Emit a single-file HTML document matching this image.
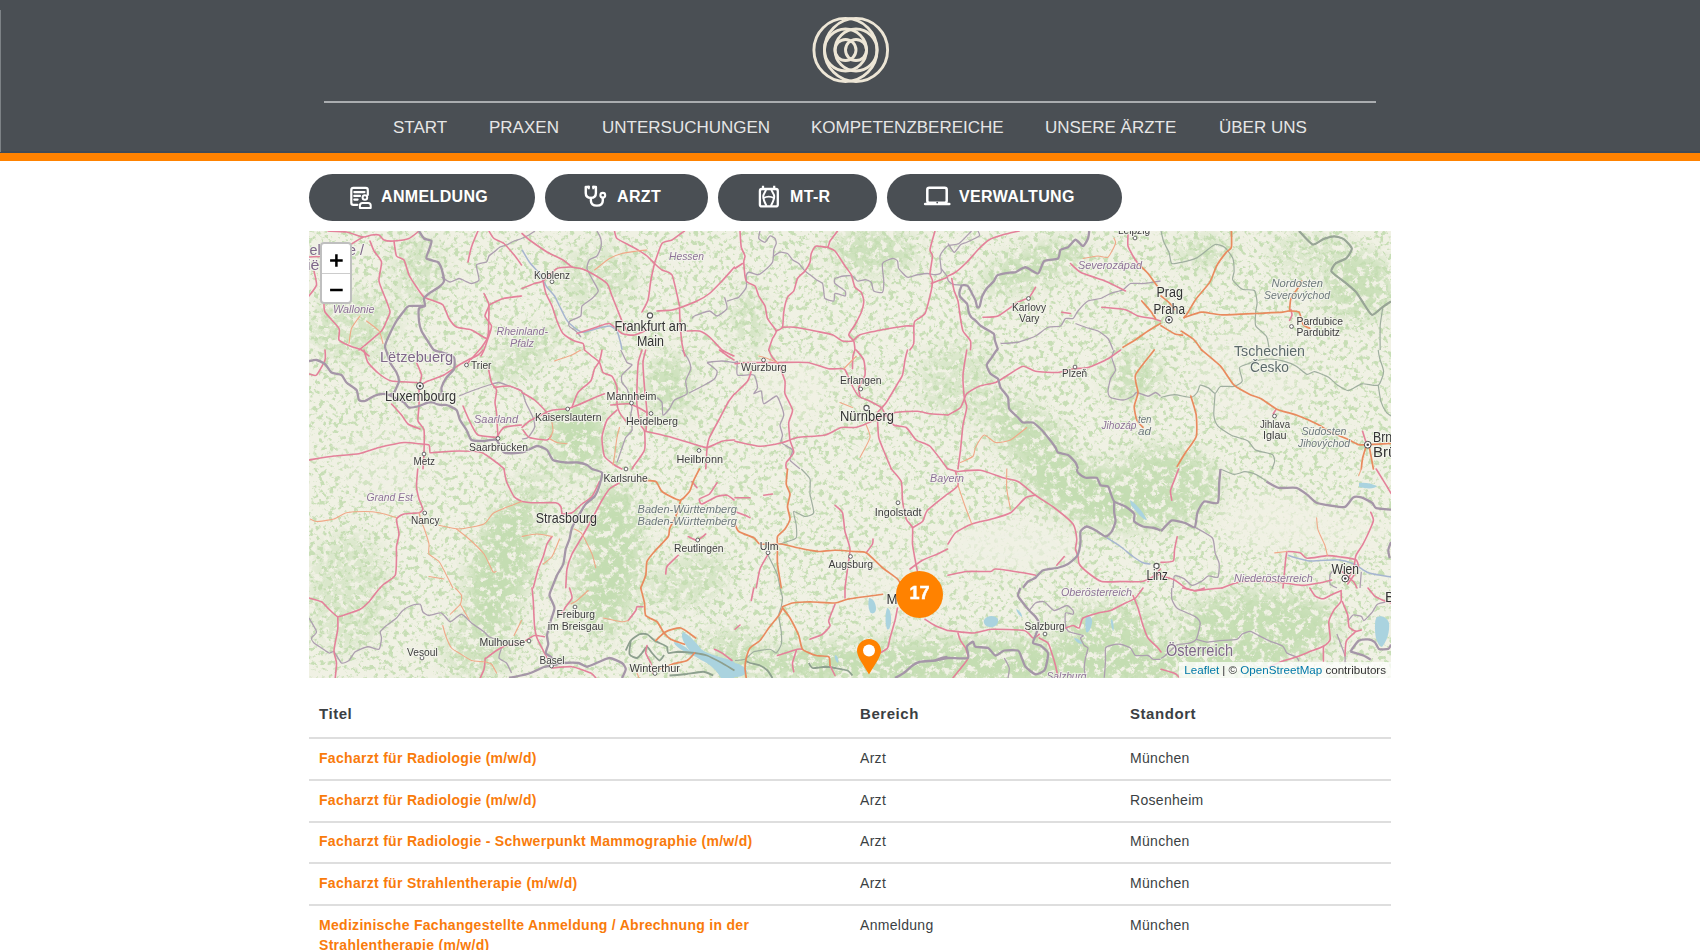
<!DOCTYPE html>
<html><head><meta charset="utf-8">
<style>
*{box-sizing:border-box}
html,body{margin:0;padding:0;background:#fff;width:1700px;height:950px;overflow:hidden;font-family:"Liberation Sans",sans-serif}
svg text{font-family:"Liberation Sans",sans-serif}
.hdr{position:absolute;left:0;top:0;width:1700px;height:152px;background:#4a4f54}
.hl2{position:absolute;left:0;top:151px;width:1700px;height:2px;background:#404a55}
.edge{position:absolute;left:0;top:10px;width:1px;height:142px;background:#7d8286}
.logo{position:absolute;left:800px;top:0;width:100px;height:100px}
.hline{position:absolute;left:324px;top:101px;width:1052px;height:2px;background:#aaadb0}
.nav{position:absolute;top:117.6px;font-size:17px;color:#e6e6e6;white-space:nowrap;line-height:20px}
.obar{position:absolute;left:0;top:152.6px;width:1700px;height:8px;background:#ff8200}
.btn{position:absolute;top:174px;height:47px;border-radius:24px;background:#4a4f54;color:#fff;font-weight:bold;font-size:16px;letter-spacing:0.35px}
.btn svg{position:absolute;top:13px}
.btn span{position:absolute;top:13px;line-height:20px;white-space:nowrap}
.map{position:absolute;left:309px;top:231px;width:1082px;height:447px;overflow:hidden;background:#e6ecd6}
.zoom{position:absolute;left:11px;top:11px;width:32px;height:62px;border:2px solid rgba(0,0,0,0.25);border-radius:4px;background:#fff}
.zoom div{position:absolute;left:0;width:28px;height:29px;text-align:center;font:bold 18px/29px "Liberation Sans",sans-serif;color:#000}
.clu{position:absolute;left:587px;top:340px;width:47px;height:47px;border-radius:50%;background:#ff8200}
.clu span{position:absolute;left:0;top:12.4px;width:47px;text-align:center;color:#fff;font:bold 18px/20px "Liberation Sans",sans-serif;-webkit-text-stroke:0.5px #fff}
.attr{position:absolute;right:0;bottom:0;height:16px;padding:0 5px;background:rgba(255,255,255,0.75);font-size:11.6px;line-height:16px;color:#333;white-space:nowrap}
.attr a{color:#0078a8;text-decoration:none}
.tbl{position:absolute;left:309px;top:690px;width:1082px}
.ln{position:absolute;left:0;width:1082px;height:2px;background:#dedede}
.cell{position:absolute;white-space:nowrap;font-size:14px;line-height:20px;letter-spacing:0.3px}
.h{font-weight:bold;color:#3b3f43;font-size:15px;letter-spacing:0.55px}
.o{font-weight:bold;color:#f97b0b}
.n{color:#3b3f43}
</style></head><body>
<div class="hdr"></div>
<div class="hl2"></div>
<div class="edge"></div>
<svg class="logo" viewBox="800 0 100 100" width="100" height="100" fill="none" stroke="#ede6d6" stroke-width="2.9">
 <circle cx="845.5" cy="50" r="31.6"/><circle cx="856" cy="50" r="31.6"/>
 <circle cx="845.5" cy="50" r="21"/><circle cx="856" cy="50" r="21"/>
 <circle cx="845.5" cy="50" r="10.5"/><circle cx="856" cy="50" r="10.5"/>
</svg>
<div class="hline"></div>
<div class="nav" style="left:393px">START</div>
<div class="nav" style="left:489px">PRAXEN</div>
<div class="nav" style="left:602px">UNTERSUCHUNGEN</div>
<div class="nav" style="left:811px">KOMPETENZBEREICHE</div>
<div class="nav" style="left:1045px">UNSERE ÄRZTE</div>
<div class="nav" style="left:1219px">ÜBER UNS</div>
<div class="obar"></div>

<div class="btn" style="left:309px;width:226px"><span style="left:72px">ANMELDUNG</span></div>
<div class="btn" style="left:545px;width:163px"><span style="left:72px">ARZT</span></div>
<div class="btn" style="left:718px;width:159px"><span style="left:72px">MT-R</span></div>
<div class="btn" style="left:887px;width:235px"><span style="left:72px">VERWALTUNG</span></div>

<svg style="position:absolute;left:0;top:0" width="1700" height="250" fill="none" stroke="#fff" stroke-width="2.2" stroke-linecap="round" stroke-linejoin="round">
 <path d="M367.8,195 V190 Q367.8,187.9 365.7,187.9 H353.4 Q351.3,187.9 351.3,190 V202.7 Q351.3,204.8 353.4,204.8 H357.4"/>
 <path d="M354.3,192.1 H364.5 M354.3,195.9 H360 M354.3,199.6 H357.6"/>
 <circle cx="364.9" cy="197.5" r="2.3" stroke-width="2"/>
 <path d="M359.9,208.1 V205.4 Q359.9,202.9 362.4,202.9 H368.2 Q370.7,202.9 370.7,205.4 V208.1 Z" stroke-width="2"/>
 <path d="M588.7,186.9 H585.75 V193 Q585.75,197.9 590.9,197.9 Q595.9,197.9 595.9,193 V186.9 H593.4" stroke-width="2.4"/>
 <path d="M588.7,185.8 V189.2 M593.4,185.8 V189.2" stroke-width="2.2" stroke-linecap="butt"/>
 <path d="M590.9,198 V200.8 Q590.9,205.6 596.9,205.6 Q602.8,205.6 602.8,200.8 V197.8" stroke-width="2.4"/>
 <circle cx="602.8" cy="195.3" r="2.4" stroke-width="2.1"/>
 <rect x="759.9" y="189" width="17.9" height="17.4" rx="2" stroke-width="2.3"/>
 <path d="M763,185.8 V188.5 M774.2,185.8 V188.5" stroke-width="2.2" stroke-linecap="butt"/>
 <path d="M765.9,190 C765.2,192.5 763.25,194 763.25,196.5 C763.25,199.5 764.2,201.5 766.2,205.2" stroke-width="2"/>
 <path d="M771.5,190 C772.2,192.5 774.2,194 774.2,196.5 C774.2,199.5 773.2,201.5 771.2,205.2" stroke-width="2"/>
 <path d="M763.6,198 Q768.7,195.2 773.9,198" stroke-width="1.9"/>
 <rect x="927.3" y="187.8" width="19.4" height="15" rx="2" stroke-width="2.5"/>
 <path d="M925.2,204 H949.3" stroke-width="2.6"/>
 <circle cx="937.2" cy="202.6" r="0.9" fill="#4a4f54" stroke="none"/>
</svg>
<div class="map">
<svg width="1082" height="447" viewBox="0 0 1082 447" style="position:absolute;left:0;top:0">
<defs>
<filter id="texA" color-interpolation-filters="sRGB" x="0" y="0" width="100%" height="100%" filterUnits="userSpaceOnUse"><feTurbulence type="fractalNoise" baseFrequency="0.2" numOctaves="4" seed="7"/><feColorMatrix type="matrix" values="0 0 0 0 0.78  0 0 0 0 0.87  0 0 0 0 0.71  7 0 0 0 -3.7"/><feGaussianBlur stdDeviation="0.5"/></filter>
<filter id="texB" color-interpolation-filters="sRGB" x="0" y="0" width="100%" height="100%" filterUnits="userSpaceOnUse"><feTurbulence type="fractalNoise" baseFrequency="0.14" numOctaves="4" seed="11"/><feColorMatrix type="matrix" values="0 0 0 0 0.77  0 0 0 0 0.865  0 0 0 0 0.70  7 0 0 0 -2.6"/><feGaussianBlur stdDeviation="0.5"/></filter>
<filter id="bl" x="-50%" y="-50%" width="200%" height="200%"><feGaussianBlur stdDeviation="9"/></filter>
<filter id="halo"><feGaussianBlur stdDeviation="0.3"/></filter>
<mask id="fm" maskUnits="userSpaceOnUse" x="0" y="0" width="1082" height="447"><g filter="url(#bl)">
<ellipse cx="268" cy="205" rx="30" ry="40" transform="rotate(0 268 205)" fill="#fff" fill-opacity="1.0"/>
<ellipse cx="192" cy="335" rx="30" ry="72" transform="rotate(15 192 335)" fill="#fff" fill-opacity="1.0"/>
<ellipse cx="300" cy="330" rx="32" ry="78" transform="rotate(8 300 330)" fill="#fff" fill-opacity="1.0"/>
<ellipse cx="780" cy="262" rx="72" ry="30" transform="rotate(20 780 262)" fill="#fff" fill-opacity="1.0"/>
<ellipse cx="720" cy="205" rx="50" ry="26" transform="rotate(38 720 205)" fill="#fff" fill-opacity="0.9"/>
<ellipse cx="725" cy="35" rx="55" ry="18" transform="rotate(-20 725 35)" fill="#fff" fill-opacity="0.9"/>
<ellipse cx="700" cy="432" rx="290" ry="24" transform="rotate(0 700 432)" fill="#fff" fill-opacity="1.0"/>
<ellipse cx="950" cy="395" rx="80" ry="35" transform="rotate(0 950 395)" fill="#fff" fill-opacity="0.95"/>
<ellipse cx="360" cy="155" rx="24" ry="32" transform="rotate(0 360 155)" fill="#fff" fill-opacity="0.8"/>
<ellipse cx="212" cy="125" rx="45" ry="14" transform="rotate(-35 212 125)" fill="#fff" fill-opacity="0.8"/>
<ellipse cx="110" cy="40" rx="25" ry="35" transform="rotate(0 110 40)" fill="#fff" fill-opacity="0.6"/>
<ellipse cx="45" cy="95" rx="45" ry="35" transform="rotate(0 45 95)" fill="#fff" fill-opacity="0.6"/>
<ellipse cx="1050" cy="55" rx="35" ry="35" transform="rotate(0 1050 55)" fill="#fff" fill-opacity="0.85"/>
<ellipse cx="826" cy="145" rx="28" ry="25" transform="rotate(0 826 145)" fill="#fff" fill-opacity="0.8"/>
<ellipse cx="895" cy="20" rx="28" ry="15" transform="rotate(0 895 20)" fill="#fff" fill-opacity="0.7"/>
<ellipse cx="855" cy="255" rx="55" ry="40" transform="rotate(0 855 255)" fill="#fff" fill-opacity="0.9"/>
<ellipse cx="565" cy="20" rx="45" ry="22" transform="rotate(0 565 20)" fill="#fff" fill-opacity="0.8"/>
<ellipse cx="440" cy="90" rx="15" ry="30" transform="rotate(0 440 90)" fill="#fff" fill-opacity="0.7"/>
<ellipse cx="800" cy="395" rx="50" ry="22" transform="rotate(0 800 395)" fill="#fff" fill-opacity="0.9"/>
<ellipse cx="290" cy="45" rx="40" ry="30" transform="rotate(0 290 45)" fill="#fff" fill-opacity="0.55"/>
<ellipse cx="225" cy="260" rx="20" ry="25" transform="rotate(0 225 260)" fill="#fff" fill-opacity="0.6"/>
<ellipse cx="380" cy="350" rx="45" ry="25" transform="rotate(-20 380 350)" fill="#fff" fill-opacity="0.6"/>
<ellipse cx="170" cy="420" rx="35" ry="28" transform="rotate(0 170 420)" fill="#fff" fill-opacity="0.7"/>
<ellipse cx="40" cy="360" rx="40" ry="60" transform="rotate(0 40 360)" fill="#fff" fill-opacity="0.5"/>
<ellipse cx="650" cy="150" rx="40" ry="40" transform="rotate(0 650 150)" fill="#fff" fill-opacity="0.5"/>
<ellipse cx="420" cy="420" rx="30" ry="25" transform="rotate(0 420 420)" fill="#fff" fill-opacity="0.6"/>
<ellipse cx="1000" cy="20" rx="40" ry="20" transform="rotate(0 1000 20)" fill="#fff" fill-opacity="0.5"/>
</g></mask>
</defs>
<rect width="1082" height="447" fill="#f0f1e4"/>
<rect width="1082" height="447" filter="url(#texA)"/>
<g filter="url(#bl)">
<ellipse cx="700" cy="315" rx="70" ry="25" transform="rotate(0 700 315)" fill="#f0f1e4" fill-opacity="0.70"/>
<ellipse cx="252" cy="345" rx="10" ry="75" transform="rotate(8 252 345)" fill="#f0f1e4" fill-opacity="0.56"/>
<ellipse cx="480" cy="160" rx="40" ry="35" transform="rotate(0 480 160)" fill="#f0f1e4" fill-opacity="0.49"/>
<ellipse cx="940" cy="145" rx="60" ry="45" transform="rotate(0 940 145)" fill="#f0f1e4" fill-opacity="0.42"/>
<ellipse cx="965" cy="290" rx="55" ry="28" transform="rotate(0 965 290)" fill="#f0f1e4" fill-opacity="0.63"/>
<ellipse cx="590" cy="360" rx="45" ry="30" transform="rotate(0 590 360)" fill="#f0f1e4" fill-opacity="0.42"/>
<ellipse cx="1040" cy="300" rx="40" ry="20" transform="rotate(0 1040 300)" fill="#f0f1e4" fill-opacity="0.49"/>
<ellipse cx="80" cy="230" rx="50" ry="35" transform="rotate(0 80 230)" fill="#f0f1e4" fill-opacity="0.35"/>
</g>
<g mask="url(#fm)"><rect width="1082" height="447" filter="url(#texB)"/></g>
<path d="M374,401 C380,404 386,410 392,418 C398,423 408,425 418,428 L425.5,431 L425.5,447 L412,447 C408,440 402,434 394,430 C386,426 380,420 376,413 C373,408 372,404 374,401 Z" fill="#aad3df"/>
<path d="M365,411 C370,412 376,415 380,419 C384,421 388,423 392,424 L391,426.5 C385,425.5 378,422.5 372,418.5 C368,415.5 365,413.5 365,411 Z" fill="#aad3df"/>
<path d="M560,367 C564,367 567,372 567,378 C567,382 563,384 561,381 C559,377 559,371 560,367 Z" fill="#aad3df"/>
<path d="M578,377 C581,377 582.5,384 582,391 C581.5,396 580,400 578,398 C576,393 576,383 578,377 Z" fill="#aad3df"/>
<path d="M526,424 C528,424 530,428 529,432 C527,431 525,427 526,424 Z" fill="#aad3df"/>
<path d="M425,432 C430,432 436,436 438,440 C437,444 432,446 425,446 Z" fill="#aad3df"/>
<path d="M675,389 C678,384 686,384 689,388 C690,393 686,397 680,396 C676,395 674,392 675,389 Z" fill="#aad3df"/>
<path d="M777,385 C780,384 784,386 783,392 C782,398 779,403 777,401 C776,396 776,390 777,385 Z" fill="#aad3df"/>
<path d="M802,388 C804,388 805,394 804.5,400 C803,399 801.5,393 802,388 Z" fill="#aad3df"/>
<path d="M765,407 C768,407 773,410 773,413 C770,413 766,410 765,407 Z" fill="#aad3df"/>
<path d="M707,378 C710,379 713,382 713,386 C711,385 708,382 707,378 Z" fill="#aad3df"/>
<path d="M1050,252 C1055,251 1062,252 1068,255 C1066,258 1058,258 1050,256 Z" fill="#aad3df"/>
<path d="M821,269 C826,272 833,279 838,289 C834,289 827,281 822,274 Z" fill="#aad3df"/>
<path d="M1068,386 C1072,384 1078,386 1080,392 C1081,400 1078,410 1073,416 C1068,414 1066,406 1066,398 C1066,392 1066,388 1068,386 Z" fill="#aad3df"/>
<path d="M213,18.75 C213.8,20.0 218.8,28.9 220.5,31.25 C222.2,33.6 228.2,39.5 230,42 C231.8,44.5 236.4,54.0 238,56.25 C239.6,58.5 244.2,63.1 245.5,65 C246.8,66.9 249.4,72.8 250.5,75 C251.6,77.2 255.8,85.8 256.75,87.5 C257.8,89.2 258.9,91.1 260.5,92.5 C262.1,93.9 270.2,100.8 273,101.25 C275.8,101.8 285.2,98.1 288,97.5 C290.8,96.9 298.5,94.8 300.5,95 C302.5,95.2 306.9,98.2 308,100 C309.1,101.8 311.2,110.6 311.75,112.5 C312.2,114.4 312.9,118.1 313,118.75" fill="none" stroke="#a6b5d0" stroke-width="1.5" stroke-linejoin="round"/>
<path d="M979.2,324.6 C981.4,325.1 996.0,329.6 1000.85,330 C1005.7,330.4 1023.5,328.4 1027.9,328.7 C1032.3,329.0 1041.8,331.7 1045,333 C1048.2,334.3 1056.3,340.7 1060,342 C1063.7,343.3 1079.8,345.6 1082,346" fill="none" stroke="#a6b5d0" stroke-width="1.5" stroke-linejoin="round"/>
<path d="M797.75,306.75 C799.1,307.6 808.9,313.6 811.5,315.5 C814.1,317.4 821.8,323.9 824,325.5 C826.2,327.1 832.2,331.0 834,331.75 C835.8,332.5 840.8,332.9 841.5,333" fill="none" stroke="#a6b5d0" stroke-width="1.5" stroke-linejoin="round"/>
<path d="M451,0 C450.9,0.8 449.2,6.4 449.75,7.5 C450.2,8.6 454.9,11.5 456,11.25 C457.1,11.0 460.0,5.4 461,5 C462.0,4.6 465.4,6.8 466,7.5 C466.6,8.2 467.4,11.4 467.25,12.5 C467.1,13.6 465.1,16.9 464.75,18.75 C464.4,20.6 464.6,29.0 463.5,31.25 C462.4,33.5 455.0,40.0 453.5,41.25 C452.0,42.5 449.9,43.8 448.5,43.75 C447.1,43.8 440.9,41.1 439.75,41.25 C438.6,41.4 437.5,43.5 437.25,45 C437.0,46.5 438.0,54.1 437.25,56.25 C436.5,58.4 430.9,65.1 429.75,66.25 C428.6,67.4 427.2,67.1 426,67.5 C424.8,67.9 418.8,69.8 418,70" fill="none" stroke="#ad9fb0" stroke-width="1.3" stroke-linejoin="round"/>
<path d="M464.75,25 C465.4,24.6 469.6,21.5 471,21.25 C472.4,21.0 477.2,21.8 478.5,22.5 C479.8,23.2 482.4,27.8 483.5,28.75 C484.6,29.8 488.5,31.4 489.75,32.5 C491.0,33.6 494.9,38.9 496,40 C497.1,41.1 499.9,42.9 501,43.75 C502.1,44.6 506.0,47.9 507.25,48.75 C508.5,49.6 512.8,51.4 513.5,52.5 C514.2,53.6 514.5,58.5 514.75,60 C515.0,61.5 515.0,66.5 516,67.5 C517.0,68.5 523.8,70.5 524.75,70 C525.8,69.5 524.9,63.0 526,62.5 C527.1,62.0 535.0,65.2 536,65 C537.0,64.8 537.0,61.2 536,60 C535.0,58.8 527.0,53.8 526,52.5 C525.0,51.2 525.1,48.2 526,47.5 C526.9,46.8 533.0,45.2 534.75,45 C536.5,44.8 542.1,44.5 543.5,45 C544.9,45.5 547.2,49.6 548.5,50 C549.8,50.4 554.6,48.6 556,48.75 C557.4,48.9 561.4,50.1 562.25,51.25 C563.1,52.4 563.6,59.0 564.75,60 C565.9,61.0 572.5,62.2 573.5,61.25 C574.5,60.2 574.8,52.9 574.75,50 C574.8,47.1 572.6,34.8 573.5,32.5 C574.4,30.2 582.0,27.8 583.5,27.5 C585.0,27.2 587.9,29.0 588.5,30 C589.1,31.0 588.8,35.9 589.75,37.5 C590.8,39.1 596.6,45.6 598.5,46.25 C600.4,46.9 606.5,44.1 608.5,43.75 C610.5,43.4 616.8,42.5 618.5,42.5 C620.2,42.5 624.6,43.9 626,43.75 C627.4,43.6 631.8,43.1 632.25,41.25 C632.8,39.4 630.4,27.6 631,25 C631.6,22.4 636.6,16.2 638.5,15 C640.4,13.8 647.6,14.0 650,12.5 C652.4,11.0 661.2,1.2 662.5,0" fill="none" stroke="#ad9fb0" stroke-width="1.3" stroke-linejoin="round"/>
<path d="M428.5,130 C428.5,131.4 426.9,142.6 428.5,144 C430.1,145.4 442.8,142.8 444.75,144 C446.8,145.2 448.5,154.6 448.5,156.5 C448.5,158.4 444.4,162.4 444.75,162.75 C445.1,163.1 451.2,159.0 452.25,160 C453.2,161.0 453.2,172.2 454.75,172.75 C456.2,173.2 465.6,165.1 467.25,165 C468.9,164.9 470.2,169.6 471,171.5 C471.8,173.4 474.8,181.8 474.75,184 C474.8,186.2 471.1,192.0 471,194 C470.9,196.0 473.4,202.2 473.5,204 C473.6,205.8 471.2,210.0 472.25,211.5 C473.2,213.0 482.6,217.2 483.5,219 C484.4,220.8 480.2,227.1 481,229 C481.8,230.9 490.0,236.9 491,237.75" fill="none" stroke="#ad9fb0" stroke-width="1.3" stroke-linejoin="round"/>
<path d="M669,0 C669.1,0.5 671.4,3.9 670.25,5 C669.1,6.1 659.6,10.4 657.75,11.25 C655.9,12.1 652.8,12.8 651.5,13.75 C650.2,14.8 646.5,21.4 645.25,21.25 C644.0,21.1 639.6,13.4 639,12.5" fill="none" stroke="#ad9fb0" stroke-width="1.3" stroke-linejoin="round"/>
<path d="M691.5,112.5 C693.2,112.4 705.5,112.0 709,111.25 C712.5,110.5 723.5,106.5 726.5,105 C729.5,103.5 736.5,97.2 739,96.25 C741.5,95.2 749.8,95.9 751.5,95 C753.2,94.1 755.2,88.2 756.5,87.5 C757.8,86.8 762.8,88.2 764,87.5 C765.2,86.8 767.5,81.8 769,80 C770.5,78.2 776.8,71.2 779,70 C781.2,68.8 789.2,68.2 791.5,67.5 C793.8,66.8 799.2,63.4 801.5,62.5 C803.8,61.6 812.0,59.8 814,58.75 C816.0,57.8 819.5,53.1 821.5,52.5 C823.5,51.9 831.0,52.8 834,52.5 C837.0,52.2 849.8,50.2 851.5,50" fill="none" stroke="#ad9fb0" stroke-width="1.3" stroke-linejoin="round"/>
<path d="M766.5,92.5 C767.5,92.9 774.2,95.5 776.5,96.25 C778.8,97.0 786.8,98.9 789,100 C791.2,101.1 797.5,105.6 799,107.5 C800.5,109.4 803.5,117.6 804,118.75" fill="none" stroke="#ad9fb0" stroke-width="1.3" stroke-linejoin="round"/>
<path d="M805.25,119 C805.0,119.8 802.6,124.5 802.75,126.5 C802.9,128.5 806.6,136.9 806.5,139 C806.4,141.1 802.2,145.6 801.5,147.75 C800.8,149.9 799.0,158.4 799,160.25 C799.0,162.1 800.0,165.6 801.5,166.5 C803.0,167.4 811.8,169.1 814,169 C816.2,168.9 822.6,166.0 824,165.25 C825.4,164.5 826.2,161.5 827.75,161.5 C829.2,161.5 837.1,165.2 839,165.25 C840.9,165.2 845.2,161.5 846.5,161.5 C847.8,161.5 851.0,164.9 851.5,165.25" fill="none" stroke="#ad9fb0" stroke-width="1.3" stroke-linejoin="round"/>
<path d="M885.8,296.2 C887.6,297.3 901.4,304.4 903.4,307 C905.4,309.6 905.4,319.3 906.1,321.9 C906.8,324.5 909.9,330.3 910.2,332.7 C910.5,335.1 909.9,345.0 908.8,346.25 C907.7,347.5 901.0,344.5 899.4,344.9 C897.8,345.3 894.2,349.4 892.6,350.3 C891.0,351.2 884.9,354.7 883.1,354.4 C881.3,354.1 876.8,348.6 875,347.6 C873.2,346.7 866.6,344.0 865.5,344.9 C864.4,345.8 864.3,355.8 864.2,357" fill="none" stroke="#ad9fb0" stroke-width="1.3" stroke-linejoin="round"/>
<path d="M1025.2,338.1 C1024.8,338.6 1021.6,342.0 1021.15,343.5 C1020.7,345.0 1020.5,351.6 1021.15,353 C1021.8,354.4 1027.3,356.6 1028,357" fill="none" stroke="#ad9fb0" stroke-width="1.3" stroke-linejoin="round"/>
<path d="M1052.3,340.8 L1051,357" fill="none" stroke="#ad9fb0" stroke-width="1.3" stroke-linejoin="round"/>
<path d="M0,387 C0.8,388.4 7.2,398.8 7.5,400.75 C7.8,402.8 2.8,405.9 2.5,407 C2.2,408.1 4.0,411.0 5,412 C6.0,413.0 11.0,416.0 12.5,417 C14.0,418.0 18.8,421.6 20,422 C21.2,422.4 23.8,419.8 25,420.75 C26.2,421.8 31.0,431.1 32.5,432 C34.0,432.9 38.6,430.6 40,429.5 C41.4,428.4 44.4,422.1 46.25,420.75 C48.1,419.4 56.4,416.0 58.75,415.75 C61.1,415.5 68.6,419.1 70,418.25 C71.4,417.4 72.4,408.8 72.5,407 C72.6,405.2 70.8,402.0 71.25,400.75 C71.8,399.5 75.9,395.9 77.5,394.5 C79.1,393.1 85.9,388.5 87.5,387 C89.1,385.5 92.2,380.8 93.75,379.5 C95.2,378.2 100.8,375.1 102.5,374.5 C104.2,373.9 110.1,372.6 111.25,373.25 C112.4,373.9 112.9,379.6 113.75,380.75 C114.6,381.9 118.1,384.4 120,384.5 C121.9,384.6 130.4,381.4 132.5,382 C134.6,382.6 139.2,390.6 141.25,390.75 C143.2,390.9 150.4,383.1 152.5,383.25 C154.6,383.4 160.2,390.2 162.5,392 C164.8,393.8 173.2,399.4 175,400.75 C176.8,402.1 178.4,404.9 180,405.75 C181.6,406.6 189.2,408.9 191.25,409.5 C193.2,410.1 199.1,411.8 200,412" fill="none" stroke="#ad9fb0" stroke-width="1.3" stroke-linejoin="round"/>
<path d="M192.5,417 C192.2,418.0 189.5,425.5 190,427 C190.5,428.5 196.2,430.5 197.5,432 C198.8,433.5 202.0,441.0 202.5,442" fill="none" stroke="#ad9fb0" stroke-width="1.3" stroke-linejoin="round"/>
<path d="M720.25,379.5 C720.9,378.8 725.0,372.9 726.5,372 C728.0,371.1 733.4,370.0 735.25,370.75 C737.1,371.5 743.0,379.1 745.25,379.5 C747.5,379.9 755.9,374.5 757.75,374.5 C759.6,374.5 763.4,378.6 764,379.5 C764.6,380.4 764.8,383.0 764,383.25 C763.2,383.5 757.2,380.9 756.5,382 C755.8,383.1 756.1,392.6 756.5,394.5 C756.9,396.4 758.5,399.8 760.25,400.75 C762.0,401.8 772.9,403.9 774,404.5 C775.1,405.1 771.4,406.0 771.5,407 C771.6,408.0 774.5,413.5 775.25,414.5 C776.0,415.5 778.9,415.8 779,417 C779.1,418.2 776.9,425.0 776.5,427 C776.1,429.0 775.2,435.0 775.25,437 C775.2,439.0 776.4,445.8 776.5,446.75" fill="none" stroke="#ad9fb0" stroke-width="1.3" stroke-linejoin="round"/>
<path d="M795.25,446.75 C795.4,445.0 796.4,432.5 796.5,429.5 C796.6,426.5 796.0,418.5 796.5,417 C797.0,415.5 800.0,414.9 801.5,414.5 C803.0,414.1 809.5,413.0 811.5,413.25 C813.5,413.5 820.0,415.9 821.5,417 C823.0,418.1 824.8,423.8 826.5,424.5 C828.2,425.2 837.2,424.1 839,424.5 C840.8,424.9 842.8,427.9 844,428.25 C845.2,428.6 850.8,428.2 851.5,428.25" fill="none" stroke="#ad9fb0" stroke-width="1.3" stroke-linejoin="round"/>
<path d="M695.25,427 C695.8,428.0 699.9,435.0 700.25,437 C700.6,439.0 699.1,446.0 699,447" fill="none" stroke="#ad9fb0" stroke-width="1.3" stroke-linejoin="round"/>
<path d="M132.5,46 C133.3,46.5 139.2,50.9 141,51 C142.8,51.1 148.5,47.6 150,47.5 C151.5,47.4 154.8,49.5 156,50 C157.2,50.5 161.1,52.6 162.5,52.5 C163.9,52.4 169.5,50.9 170,49 C170.5,47.1 166.8,35.8 167.5,34 C168.2,32.2 176.2,31.9 177.5,31 C178.8,30.1 179.2,26.0 180,25 C180.8,24.0 183.9,21.9 185,21 C186.1,20.1 189.8,16.7 191,16 C192.2,15.3 196.1,14.6 197.5,14 C198.9,13.4 203.5,10.7 205,10 C206.5,9.3 211.0,8.1 212.5,7.5 C214.0,6.9 218.7,4.8 220,4 C221.3,3.2 225.4,0.4 226,0" fill="none" stroke="#ad9fb0" stroke-width="1.3" stroke-linejoin="round"/>
<path d="M150,165 C151.2,164.5 159.5,161.1 162.5,160 C165.5,158.9 177.2,154.8 180,154 C182.8,153.2 188.0,151.4 190,151.5 C192.0,151.6 197.8,154.2 200,155 C202.2,155.8 210.8,158.3 212.5,160 C214.2,161.7 215.6,168.8 216.75,171.5 C217.9,174.2 223.1,184.0 224,186.5 C224.9,189.0 226.0,194.5 225.5,196.5 C225.0,198.5 220.2,205.3 219,206.5 C217.8,207.7 213.6,207.8 213,208" fill="none" stroke="#ad9fb0" stroke-width="1.3" stroke-linejoin="round"/>
<path d="M288,0 C288.4,0.8 291.4,5.9 291.75,7.5 C292.1,9.1 292.4,14.2 292,16 C291.6,17.8 289.1,23.7 288,25 C286.9,26.3 281.5,27.5 280.5,28.75 C279.5,30.0 277.6,35.4 278,37.5 C278.4,39.6 283.1,47.8 284.25,50 C285.4,52.2 289.4,58.2 289.25,60 C289.1,61.8 284.6,66.0 283,67.5 C281.4,69.0 274.1,73.2 273,75 C271.9,76.8 272.9,83.5 271.75,85 C270.6,86.5 262.2,89.0 261,90 C259.8,91.0 259.4,94.0 260,95 C260.6,96.0 265.6,98.9 266.75,100 C267.9,101.1 271.5,105.4 272,106" fill="none" stroke="#ad9fb0" stroke-width="1.3" stroke-linejoin="round"/>
<path d="M415.5,66.25 C415.8,67.4 418.8,75.6 418,77.5 C417.2,79.4 409.8,84.8 408,85 C406.2,85.2 402.8,80.0 400.5,80 C398.2,80.0 387.2,84.2 385.5,85 C383.8,85.8 383.2,87.2 383,87.5" fill="none" stroke="#ad9fb0" stroke-width="1.3" stroke-linejoin="round"/>
<path d="M373,119 C373.6,119.9 378.1,125.9 379,127.75 C379.9,129.6 382.0,135.5 381.75,137.75 C381.5,140.0 377.1,147.5 376.75,150 C376.4,152.5 379.1,160.8 378,162.75 C376.9,164.7 367.2,167.5 365.5,169 C363.8,170.5 361.6,176.2 360.5,177.75 C359.4,179.2 354.8,184.6 354,184 C353.2,183.4 353.6,173.2 353,171.5 C352.4,169.8 348.5,167.0 348,166.5" fill="none" stroke="#ad9fb0" stroke-width="1.3" stroke-linejoin="round"/>
<path d="M398,131.5 C399.0,132.3 407.2,138.4 408,140 C408.8,141.6 406.8,146.3 405.5,147.75 C404.2,149.2 398.1,152.6 395.5,154 C392.9,155.4 381.6,161.2 380,162" fill="none" stroke="#ad9fb0" stroke-width="1.3" stroke-linejoin="round"/>
<path d="M398,131.5 C399.5,131.3 410.2,130.0 413,130 C415.8,130.0 423.9,131.5 425.5,131.5 C427.1,131.5 428.2,130.2 428.5,130" fill="none" stroke="#ad9fb0" stroke-width="1.3" stroke-linejoin="round"/>
<path d="M311.75,119 C312.4,120.2 316.9,130.0 318,131.5 C319.1,133.0 323.5,132.8 323,134 C322.5,135.2 314.0,142.2 313,144 C312.0,145.8 312.5,150.1 313,151.5 C313.5,152.9 317.2,156.2 318,157.75 C318.8,159.2 320.0,164.6 320.5,166.5 C321.0,168.4 322.9,174.8 323,176.5 C323.1,178.2 321.8,181.8 321.75,184 C321.8,186.2 323.5,196.8 323,199 C322.5,201.2 317.6,205.0 316.75,206.5 C315.9,208.0 314.9,211.5 314,214 C313.1,216.5 308.6,229.8 308,231.5" fill="none" stroke="#ad9fb0" stroke-width="1.3" stroke-linejoin="round"/>
<path d="M862.8,357 C862.8,358.1 862.3,365.8 862.8,367.8 C863.3,369.8 865.9,375.5 868.2,377.3 C870.5,379.1 883.5,383.9 885.8,385.4 C888.1,386.9 891.1,389.9 891.2,392.2 C891.3,394.5 888.4,406.4 887.2,408.4 C886.0,410.4 881.0,412.0 879.1,412.5 C877.2,413.0 870.5,412.6 868.2,413.8 C865.9,415.0 857.7,423.3 856.1,424.7 C854.5,426.1 852.4,427.1 852,427.4" fill="none" stroke="#ad9fb0" stroke-width="1.3" stroke-linejoin="round"/>
<path d="M887.2,408.4 C888.3,408.7 895.8,411.0 898,411.1 C900.2,411.2 905.8,410.1 908.8,409.8 C911.8,409.5 925.4,409.1 927.8,408.4 C930.2,407.7 931.9,403.8 933.2,403 C934.6,402.2 939.7,400.2 941.3,400.3 C942.9,400.4 947.5,403.4 949.4,404.4 C951.3,405.3 957.8,408.7 960.25,409.8 C962.7,410.9 972.0,414.0 973.8,415.2 C975.6,416.4 976.5,420.9 977.85,422 C979.2,423.1 986.1,425.2 987.3,426 C988.5,426.8 989.7,429.7 990,430.1" fill="none" stroke="#ad9fb0" stroke-width="1.3" stroke-linejoin="round"/>
<path d="M1027.9,403 C1028.3,404.1 1031.2,411.6 1032,413.8 C1032.8,416.0 1035.6,422.9 1036,424.7 C1036.4,426.5 1036.0,431.3 1036,432" fill="none" stroke="#ad9fb0" stroke-width="1.3" stroke-linejoin="round"/>
<path d="M1038.7,390.8 C1039.2,390.1 1042.8,384.5 1044.2,384 C1045.6,383.5 1051.2,384.8 1052.3,385.4 C1053.4,385.9 1053.9,389.9 1055,389.5 C1056.1,389.1 1061.8,383.0 1063.1,381.35 C1064.4,379.7 1066.9,374.3 1068.5,373.2 C1070.1,372.1 1078.2,370.8 1079.3,370.5" fill="none" stroke="#ad9fb0" stroke-width="1.3" stroke-linejoin="round"/>
<path d="M632,37.4 C632.6,38.2 637.0,43.7 637.8,45 C638.5,46.3 638.8,49.2 639.5,50 C640.2,50.8 643.2,53.0 644.6,53.4 C646.0,53.8 652.2,54.2 653,54.3" fill="none" stroke="#ad9fb0" stroke-width="1.3" stroke-linejoin="round"/>
<path d="M852,0 C852.3,1.1 853.9,8.6 854.7,10.8 C855.5,13.0 859.3,19.5 860.1,21.65 C860.9,23.8 861.4,31.6 862.8,32.5 C864.2,33.4 871.2,31.6 873.65,31.1 C876.1,30.6 884.9,28.2 887.2,27.1 C889.5,26.0 894.8,21.7 896.65,20.3 C898.5,18.9 904.2,13.9 906.1,13.5 C908.0,13.1 913.8,14.8 915.6,16.2 C917.4,17.6 922.8,24.7 923.7,27.1 C924.7,29.5 925.1,38.4 925.1,40.6 C925.1,42.8 922.9,46.9 923.7,48.7 C924.5,50.5 931.0,57.1 933.2,58.2 C935.4,59.3 943.9,58.1 945.4,59.5 C946.9,60.9 948.0,69.5 948.1,71.7 C948.2,73.9 946.8,78.9 946.7,81.2 C946.6,83.5 945.6,92.3 946.7,94.7 C947.8,97.1 956.2,103.1 957.55,105.5 C958.9,107.9 960.0,117.7 960.25,119" fill="none" stroke="#9fae9f" stroke-width="1.2" stroke-linejoin="round"/>
<path d="M990,0 C991.4,1.4 1001.2,12.7 1003.6,13.5 C1006.0,14.3 1012.2,8.9 1014.4,8.1 C1016.6,7.3 1023.2,5.4 1025.2,5.4 C1027.2,5.4 1032.9,6.9 1034.7,8.1 C1036.5,9.3 1042.5,15.7 1042.8,17.6 C1043.1,19.5 1039.0,25.6 1037.4,27.1 C1035.8,28.6 1028.0,31.1 1026.55,32.5 C1025.1,33.9 1021.6,38.7 1022.5,40.6 C1023.4,42.5 1033.6,49.4 1036,51.4 C1038.4,53.4 1045.0,58.7 1046.9,60.9 C1048.8,63.1 1053.4,70.8 1055,73.1 C1056.6,75.4 1061.2,83.6 1063.1,83.9 C1065.0,84.2 1072.0,77.1 1073.9,75.8 C1075.8,74.5 1081.2,70.9 1082,70.4" fill="none" stroke="#9fae9f" stroke-width="1.2" stroke-linejoin="round"/>
<path d="M1073.9,75.8 C1073.6,77.7 1071.5,90.4 1071.2,94.7 C1070.9,99.0 1071.2,116.6 1071.2,119" fill="none" stroke="#9fae9f" stroke-width="1.2" stroke-linejoin="round"/>
<path d="M852,166.4 C853.4,166.1 862.5,163.7 865.5,163.65 C868.5,163.7 879.5,166.7 881.8,166.4 C884.1,166.1 887.6,162.2 888.5,161 C889.4,159.8 890.1,154.6 891.2,154.2 C892.3,153.8 897.9,156.1 899.4,156.9 C900.9,157.7 904.9,162.4 906.1,162.3 C907.3,162.2 909.6,156.2 911.5,155.5 C913.4,154.8 922.9,156.0 925.1,155.5 C927.3,155.0 932.7,152.0 933.2,150.1 C933.7,148.2 929.8,138.4 930.5,136.6 C931.2,134.8 938.4,133.2 940,132.5 C941.6,131.8 944.7,130.2 946.7,129.8 C948.7,129.4 957.3,128.0 960,128 C962.7,128.0 971.1,129.1 973.8,129.8 C976.5,130.5 984.9,133.8 987.3,135.2 C989.7,136.6 996.3,142.9 998.1,143.4 C999.9,143.9 1003.5,140.4 1005.6,140.65 C1007.7,140.9 1016.9,144.7 1019.15,146.1 C1021.4,147.5 1026.6,152.8 1028.6,154.2 C1030.6,155.5 1037.0,159.7 1039.4,159.6 C1041.8,159.5 1050.0,153.3 1053,152.8 C1056.0,152.3 1067.0,155.4 1069.2,154.2 C1071.4,153.0 1074.5,143.4 1074.6,140.65 C1074.7,137.9 1071.1,129.3 1070.6,127.1 C1070.1,124.9 1069.3,119.8 1069.2,119" fill="none" stroke="#9fae9f" stroke-width="1.2" stroke-linejoin="round"/>
<path d="M1069.2,154.2 C1069.5,155.8 1071.1,167.7 1071.9,170.4 C1072.7,173.1 1076.3,179.8 1077.3,181.25 C1078.3,182.7 1081.5,184.6 1082,185" fill="none" stroke="#9fae9f" stroke-width="1.2" stroke-linejoin="round"/>
<path d="M906.1,162.3 C906.0,164.5 904.5,180.8 904.8,184 C905.1,187.2 907.0,192.8 908.8,194.8 C910.6,196.8 919.4,202.8 922.4,204.25 C925.4,205.7 936.2,208.2 938.6,209.7 C941.0,211.2 944.3,217.8 946.7,219.1 C949.1,220.4 961.1,222.1 963,223.2 C964.9,224.3 965.7,228.5 965.7,230 C965.7,231.5 963.3,237.2 963,238" fill="none" stroke="#9fae9f" stroke-width="1.2" stroke-linejoin="round"/>
<path d="M492.25,238 C493.1,239.0 500.1,245.5 501,248 C501.9,250.5 500.6,259.6 501,263 C501.4,266.4 505.2,279.5 504.75,281.75 C504.2,284.0 498.0,285.6 496,285.5 C494.0,285.4 485.6,279.6 484.75,280.5 C483.9,281.4 487.0,291.6 487.25,294.25 C487.5,296.9 488.1,305.1 487.25,306.75 C486.4,308.4 480.1,309.9 478.5,310.5 C476.9,311.1 471.8,312.8 471,313" fill="none" stroke="#9fae9f" stroke-width="1.2" stroke-linejoin="round"/>
<path d="M458.5,323 C459.0,324.0 462.5,330.9 463.5,333 C464.5,335.1 467.8,341.9 468.5,344.25 C469.2,346.6 470.8,355.5 471,356.75" fill="none" stroke="#9fae9f" stroke-width="1.2" stroke-linejoin="round"/>
<path d="M911.5,238 C912.9,238.5 922.7,243.1 925.1,243.4 C927.5,243.7 933.7,240.7 935.9,240.7 C938.1,240.7 944.5,242.5 946.7,243.4 C948.9,244.3 956.5,249.5 957.55,250.2" fill="none" stroke="#9fae9f" stroke-width="1.2" stroke-linejoin="round"/>
<path d="M316.75,419.5 C317.2,418.5 320.4,411.1 321.75,409.5 C323.1,407.9 328.9,403.9 330.5,403.25 C332.1,402.6 336.5,402.6 338,403.25 C339.5,403.9 344.2,408.6 345.5,409.5 C346.8,410.4 349.2,411.4 350.5,412 C351.8,412.6 357.1,414.8 358,415.75 C358.9,416.8 358.1,421.5 359.25,422 C360.4,422.5 366.6,420.8 369.25,420.75 C371.9,420.8 382.6,421.6 385.5,422 C388.4,422.4 395.2,423.5 398,424.5 C400.8,425.5 410.2,430.5 413,432 C415.8,433.5 424.2,438.8 425.5,439.5" fill="none" stroke="#8d9f8e" stroke-width="1.8" stroke-linejoin="round"/>
<path d="M321.75,409.5 C321.6,410.9 319.9,421.5 320.5,423.25 C321.1,425.0 326.8,427.1 328,427 C329.2,426.9 332.0,423.1 333,422 C334.0,420.9 337.0,415.8 338,415.75 C339.0,415.8 341.8,420.6 343,422 C344.2,423.4 349.3,429.3 350.5,429.5 C351.7,429.7 354.6,424.6 355,424" fill="none" stroke="#8d9f8e" stroke-width="1.8" stroke-linejoin="round"/>
<path d="M360.5,444.5 C362.0,444.4 372.1,443.6 375.5,443.25 C378.9,442.9 391.4,440.6 394.25,440.75 C397.1,440.9 403.2,444.1 404.25,444.5" fill="none" stroke="#8d9f8e" stroke-width="1.8" stroke-linejoin="round"/>
<path d="M471,357 C471.2,358.0 473.4,365.1 473.5,367 C473.6,368.9 472.6,374.0 472.25,375.75 C471.9,377.5 469.8,382.0 469.75,384.5 C469.8,387.0 472.0,397.9 472.25,400.75 C472.5,403.6 472.8,411.1 472.25,413.25 C471.8,415.4 468.4,421.5 467.25,422 C466.1,422.5 463.2,418.4 461,418.25 C458.8,418.1 447.2,419.8 444.75,420.75 C442.2,421.8 437.9,427.4 436,428.25 C434.1,429.1 427.0,429.4 426,429.5" fill="none" stroke="#9fae9f" stroke-width="1.2" stroke-linejoin="round"/>
<path d="M436,429.5 C436.5,429.8 439.5,431.5 441,432 C442.5,432.5 449.2,433.8 451,434.5 C452.8,435.2 457.2,438.2 458.5,439.5 C459.8,440.8 463.0,446.2 463.5,447" fill="none" stroke="#8d9f8e" stroke-width="1.8" stroke-linejoin="round"/>
<path d="M499.75,432 C500.1,432.5 501.9,436.6 503.5,437 C505.1,437.4 513.8,435.8 516,435.75 C518.2,435.8 523.8,436.6 526,437 C528.2,437.4 536.8,438.8 538.5,439.5 C540.2,440.2 543.0,444.0 543.5,444.5" fill="none" stroke="#8d9f8e" stroke-width="1.8" stroke-linejoin="round"/>
<path d="M19,0 C20.9,0.1 34.0,0.4 37.5,1 C41.0,1.6 51.5,5.7 54,6 C56.5,6.3 60.9,4.2 62.5,4 C64.1,3.8 68.8,3.5 70,4 C71.2,4.5 73.5,8.4 75,9 C76.5,9.6 82.5,10.2 85,10 C87.5,9.8 97.5,8.5 100,7.5 C102.5,6.5 109.0,0.8 110,0" fill="none" stroke="#e4819a" stroke-width="1.6" stroke-linejoin="round" stroke-linecap="round"/>
<path d="M54,6 C52.7,6.8 43.3,12.2 41,14 C38.7,15.8 35.1,22.8 31,24 C26.9,25.2 3.1,25.8 0,26" fill="none" stroke="#e4819a" stroke-width="1.6" stroke-linejoin="round" stroke-linecap="round"/>
<path d="M61,10 C61.4,11.0 63.9,17.9 65,20 C66.2,22.1 72.0,28.0 72.5,31 C73.0,34.0 69.5,46.1 70,50 C70.5,53.9 76.4,66.9 77.5,70 C78.6,73.1 81.0,79.0 81,81 C81.0,83.0 78.3,88.1 77.5,90 C76.7,91.9 74.8,97.5 72.5,100 C70.2,102.5 57.2,113.1 55,115 C52.8,116.9 50.5,118.6 50,119" fill="none" stroke="#e4819a" stroke-width="1.6" stroke-linejoin="round" stroke-linecap="round"/>
<path d="M85,10 C85.2,11.5 86.5,23.1 87.5,25 C88.5,26.9 93.8,27.1 95,29 C96.2,30.9 98.8,41.3 100,44 C101.2,46.7 106.0,53.8 107.5,56 C109.0,58.2 113.2,64.6 115,66 C116.8,67.4 123.1,69.2 125,70 C126.9,70.8 132.5,72.2 134,74 C135.5,75.8 138.7,85.3 140,87.5 C141.3,89.7 145.2,94.8 147.5,96 C149.8,97.2 159.5,97.8 162.5,99 C165.5,100.2 175.7,107.4 177.5,107.5 C179.3,107.6 180.7,100.8 181,100" fill="none" stroke="#e4819a" stroke-width="1.6" stroke-linejoin="round" stroke-linecap="round"/>
<path d="M175,62.5 C175.5,63.6 179.9,71.8 180,74 C180.1,76.2 175.8,82.9 176,85 C176.2,87.1 182.2,92.8 182.5,95 C182.8,97.2 179.8,105.1 179,107.5 C178.2,109.9 175.7,117.2 175,119 C174.3,120.8 172.3,124.4 172,125" fill="none" stroke="#e4819a" stroke-width="1.6" stroke-linejoin="round" stroke-linecap="round"/>
<path d="M180,74 C181.4,73.3 190.8,68.4 194,67.5 C197.2,66.6 210.7,65.2 212.5,65" fill="none" stroke="#e4819a" stroke-width="1.6" stroke-linejoin="round" stroke-linecap="round"/>
<path d="M159,31 C159.3,29.5 161.5,19.1 162.5,16 C163.5,12.9 168.3,1.6 169,0" fill="none" stroke="#e4819a" stroke-width="1.6" stroke-linejoin="round" stroke-linecap="round"/>
<path d="M180,0 C180.5,0.8 183.5,6.2 185,7.5 C186.5,8.8 192.9,10.8 195,12.5 C197.1,14.2 204.2,22.9 206,25 C207.8,27.1 211.8,33.1 212.5,34" fill="none" stroke="#e4819a" stroke-width="1.6" stroke-linejoin="round" stroke-linecap="round"/>
<path d="M15,70 C15.1,71.1 14.5,78.2 16,81 C17.5,83.8 28.6,94.7 30,97.5 C31.4,100.3 28.9,107.2 30,109 C31.1,110.8 38.8,114.0 41,115 C43.2,116.0 50.6,118.0 52.5,119 C54.4,120.0 59.2,124.4 60,125" fill="none" stroke="#e4819a" stroke-width="1.6" stroke-linejoin="round" stroke-linecap="round"/>
<path d="M5,40 C5.2,41.4 8.0,51.5 7.5,54 C7.0,56.5 0.8,63.9 0,65" fill="none" stroke="#e4819a" stroke-width="1.6" stroke-linejoin="round" stroke-linecap="round"/>
<path d="M213,2.5 C213.8,3.1 218.0,7.2 220.5,9 C223.0,10.8 234.7,19.0 238,21 C241.3,23.0 251.5,27.5 254,29 C256.5,30.5 261.2,35.1 263,36 C264.8,36.9 270.0,36.9 272,37.5 C274.0,38.1 280.4,41.0 283,42.5 C285.6,44.0 296.0,50.2 298,52.5 C300.0,54.8 302.0,62.5 303,65 C304.0,67.5 307.0,75.0 308,77.5 C309.0,80.0 312.0,87.8 313,90 C314.0,92.2 317.5,99.0 318,100" fill="none" stroke="#e4819a" stroke-width="1.6" stroke-linejoin="round" stroke-linecap="round"/>
<path d="M213,57.5 C214.2,57.0 223.4,53.2 225.5,52.5 C227.6,51.8 231.8,51.5 234,50 C236.2,48.5 245.1,38.9 248,37.5 C250.9,36.1 261.5,36.1 263,36" fill="none" stroke="#e4819a" stroke-width="1.6" stroke-linejoin="round" stroke-linecap="round"/>
<path d="M234,50 C234.3,51.2 236.1,60.0 237,62.5 C237.9,65.0 241.9,72.2 243,75 C244.1,77.8 246.9,87.2 248,90 C249.1,92.8 252.2,100.5 254,102.5 C255.8,104.5 263.5,109.0 265.5,110 C267.5,111.0 273.0,111.6 274,112.5 C275.0,113.4 275.4,118.3 275.5,119" fill="none" stroke="#e4819a" stroke-width="1.6" stroke-linejoin="round" stroke-linecap="round"/>
<path d="M425.5,36 C424.2,37.4 415.5,47.4 413,50 C410.5,52.6 403.0,60.5 400.5,62.5 C398.0,64.5 390.8,68.7 388,70 C385.2,71.3 375.5,75.1 373,76 C370.5,76.9 365.5,78.6 363,79 C360.5,79.4 349.5,79.9 348,80" fill="none" stroke="#e4819a" stroke-width="1.6" stroke-linejoin="round" stroke-linecap="round"/>
<path d="M370.5,75 C369.8,71.9 364.8,47.6 363,44 C361.2,40.4 354.8,40.1 353,39 C351.2,37.9 347.0,33.9 345.5,32.5 C344.0,31.1 339.6,26.4 338,25 C336.4,23.6 330.6,20.0 329,19 C327.4,18.0 323.9,16.1 321.75,15 C319.6,13.8 309.6,9.0 308,7.5 C306.4,6.0 305.8,0.8 305.5,0" fill="none" stroke="#e4819a" stroke-width="1.6" stroke-linejoin="round" stroke-linecap="round"/>
<path d="M345.5,32.5 C346.2,30.5 351.2,14.8 353,12.5 C354.8,10.2 360.8,10.2 363,9 C365.2,7.8 374.2,0.9 375.5,0" fill="none" stroke="#e4819a" stroke-width="1.6" stroke-linejoin="round" stroke-linecap="round"/>
<path d="M345.5,32.5 C345.1,34.2 342.4,46.4 341.75,50 C341.1,53.6 339.9,65.9 339,69 C338.1,72.1 333.6,79.8 333,81" fill="none" stroke="#e4819a" stroke-width="1.6" stroke-linejoin="round" stroke-linecap="round"/>
<path d="M370.5,77.5 C370.6,78.8 370.8,86.5 371,90 C371.2,93.5 372.5,109.0 373,112.5 C373.5,116.0 375.7,123.8 376,125" fill="none" stroke="#e4819a" stroke-width="1.6" stroke-linejoin="round" stroke-linecap="round"/>
<path d="M375.5,100 C377.0,100.0 388.0,99.4 390.5,100 C393.0,100.6 398.2,104.1 400.5,106 C402.8,107.9 410.6,117.1 413,119 C415.4,120.9 423.8,124.4 425,125" fill="none" stroke="#e4819a" stroke-width="1.6" stroke-linejoin="round" stroke-linecap="round"/>
<path d="M268,102.5 C270.0,101.8 284.8,97.0 288,96 C291.2,95.0 298.0,91.8 300.5,92.5 C303.0,93.2 310.5,101.3 313,102.5 C315.5,103.7 322.8,104.5 325.5,104 C328.2,103.5 338.6,98.6 340,98" fill="none" stroke="#e4819a" stroke-width="1.6" stroke-linejoin="round" stroke-linecap="round"/>
<path d="M55,119 C55.4,120.2 57.5,129.1 59,131.5 C60.5,133.9 67.7,140.9 70,142.75 C72.3,144.6 78.8,149.1 82.5,150 C86.2,150.9 104.8,151.0 107.5,151.5 C110.2,152.0 109.8,154.7 110,155" fill="none" stroke="#e4819a" stroke-width="1.6" stroke-linejoin="round" stroke-linecap="round"/>
<path d="M110,155 C110.9,154.5 116.5,151.1 119,150 C121.5,148.9 131.9,145.6 135,144 C138.1,142.4 147.6,135.5 150,134 C152.4,132.5 157.1,130.0 159,129 C160.9,128.0 167.5,125.0 169,124 C170.5,123.0 173.5,119.5 174,119" fill="none" stroke="#e4819a" stroke-width="1.6" stroke-linejoin="round" stroke-linecap="round"/>
<path d="M82.5,173 C83.5,174.1 90.8,182.0 92.5,184 C94.2,186.0 97.2,191.6 99,193 C100.8,194.4 109.8,197.5 111,198" fill="none" stroke="#e4819a" stroke-width="1.6" stroke-linejoin="round" stroke-linecap="round"/>
<path d="M107.5,131.5 C108.0,132.8 112.2,141.7 112.5,144 C112.8,146.3 110.2,153.9 110,155" fill="none" stroke="#e4819a" stroke-width="1.6" stroke-linejoin="round" stroke-linecap="round"/>
<path d="M0,229 C2.5,228.6 20.0,225.6 25,225 C30.0,224.4 45.5,223.6 50,222.75 C54.5,221.9 65.5,217.6 70,216.5 C74.5,215.4 91.0,211.9 95,211.5 C99.0,211.1 107.5,212.5 110,212.75 C112.5,213.0 118.9,213.1 120,214 C121.1,214.9 120.5,220.8 121,221.5 C121.5,222.2 122.1,221.7 125,221.5 C127.9,221.3 145.2,220.0 150,220 C154.8,220.0 168.8,220.3 172.5,221.5 C176.2,222.7 185.2,229.9 187.5,231.5 C189.8,233.1 194.2,237.1 195,237.75" fill="none" stroke="#e4819a" stroke-width="1.6" stroke-linejoin="round" stroke-linecap="round"/>
<path d="M179,135 C179.3,136.7 181.7,149.1 182.5,151.5 C183.3,153.9 187.2,157.0 187.5,159 C187.8,161.0 186.0,169.2 186,171.5 C186.0,173.8 187.2,177.9 187.5,181.5 C187.8,185.1 188.8,204.4 189,207" fill="none" stroke="#e4819a" stroke-width="1.6" stroke-linejoin="round" stroke-linecap="round"/>
<path d="M154,175 C154.8,176.9 161.0,191.1 162.5,194 C164.0,196.9 166.5,202.8 169,204 C171.5,205.2 185.7,206.2 187.5,206.5" fill="none" stroke="#e4819a" stroke-width="1.6" stroke-linejoin="round" stroke-linecap="round"/>
<path d="M187.5,206.5 C188.2,205.5 192.5,197.8 195,196.5 C197.5,195.2 210.8,194.2 212.5,194" fill="none" stroke="#e4819a" stroke-width="1.6" stroke-linejoin="round" stroke-linecap="round"/>
<path d="M185,156.5 C186.5,156.3 197.2,154.7 200,155 C202.8,155.3 211.2,159.5 212.5,160" fill="none" stroke="#e4819a" stroke-width="1.6" stroke-linejoin="round" stroke-linecap="round"/>
<path d="M16,119 C16.0,120.0 16.9,126.5 16,129 C15.2,131.5 9.1,142.6 7.5,144 C5.9,145.4 0.8,143.1 0,143" fill="none" stroke="#e4819a" stroke-width="1.6" stroke-linejoin="round" stroke-linecap="round"/>
<path d="M213,196.5 C213.8,195.8 218.6,191.2 220.5,190 C222.4,188.8 229.7,185.1 232,184 C234.3,182.9 241.3,179.6 244,179 C246.7,178.4 256.5,178.2 259,177.75 C261.5,177.2 266.6,175.0 269,174 C271.4,173.0 280.4,168.9 283,167.75 C285.6,166.6 294.2,163.2 295.5,162.75" fill="none" stroke="#e4819a" stroke-width="1.6" stroke-linejoin="round" stroke-linecap="round"/>
<path d="M213,161.5 C214.2,162.2 223.0,167.0 225.5,169 C228.0,171.0 236.3,179.6 238,181.5 C239.7,183.4 241.6,187.3 242,188" fill="none" stroke="#e4819a" stroke-width="1.6" stroke-linejoin="round" stroke-linecap="round"/>
<path d="M214,199 C214.7,199.8 218.1,205.5 220.5,206.5 C222.9,207.5 235.8,209.2 238,209 C240.2,208.8 241.6,205.4 242,205" fill="none" stroke="#e4819a" stroke-width="1.6" stroke-linejoin="round" stroke-linecap="round"/>
<path d="M263,176.5 C263.6,175.0 267.1,164.2 269,161.5 C270.9,158.8 280.1,152.4 281.75,150 C283.4,147.6 284.6,139.8 285.5,137.75 C286.4,135.8 289.8,131.9 290.5,130 C291.2,128.1 292.8,120.1 293,119" fill="none" stroke="#e4819a" stroke-width="1.6" stroke-linejoin="round" stroke-linecap="round"/>
<path d="M275.5,119 C276.2,119.6 281.5,124.0 283,125.25 C284.5,126.5 289.4,129.9 290.5,131.5 C291.6,133.1 292.8,140.1 294,141.5 C295.2,142.9 301.6,143.8 303,145.25 C304.4,146.8 307.5,153.8 308,156.5 C308.5,159.2 307.8,170.2 308,172.75 C308.2,175.2 309.6,179.8 310.5,181.5 C311.4,183.2 316.1,189.2 316.75,190" fill="none" stroke="#e4819a" stroke-width="1.6" stroke-linejoin="round" stroke-linecap="round"/>
<path d="M333,119 C332.6,120.2 329.8,127.8 329.25,131.5 C328.8,135.2 328.1,152.2 328,156.5 C327.9,160.8 327.6,170.2 328,174 C328.4,177.8 331.0,191.4 331.75,194 C332.5,196.6 335.1,197.5 335.5,200 C335.9,202.5 336.5,215.6 335.5,219 C334.5,222.4 326.8,232.1 325.5,234 C324.2,235.9 323.2,237.6 323,238" fill="none" stroke="#e4819a" stroke-width="1.6" stroke-linejoin="round" stroke-linecap="round"/>
<path d="M336.75,119 C336.5,120.2 334.1,127.8 334,131.5 C333.9,135.2 335.1,151.5 335.5,156.5 C335.9,161.5 337.9,177.2 338,181.5 C338.1,185.8 337.1,198.2 337,200" fill="none" stroke="#e4819a" stroke-width="1.6" stroke-linejoin="round" stroke-linecap="round"/>
<path d="M301.75,174 C303.5,173.9 316.2,172.5 319,172.75 C321.8,173.0 327.4,175.6 329.25,176.5 C331.1,177.4 337.1,181.0 338,181.5" fill="none" stroke="#e4819a" stroke-width="1.6" stroke-linejoin="round" stroke-linecap="round"/>
<path d="M308,179 C307.0,180.0 299.5,186.2 298,189 C296.5,191.8 293.2,202.9 293,206.5 C292.8,210.1 294.2,222.5 295.5,225.25 C296.8,228.0 303.8,232.7 305.5,234 C307.2,235.3 312.2,237.6 313,238" fill="none" stroke="#e4819a" stroke-width="1.6" stroke-linejoin="round" stroke-linecap="round"/>
<path d="M335.5,200 C338.2,200.7 357.8,205.1 363,206.5 C368.2,207.9 384.5,213.0 388,214 C391.5,215.0 395.5,216.9 398,216.5 C400.5,216.1 410.2,211.0 413,210.25 C415.8,209.5 424.2,209.1 425.5,209" fill="none" stroke="#e4819a" stroke-width="1.6" stroke-linejoin="round" stroke-linecap="round"/>
<path d="M398,216.5 C398.2,215.5 399.2,209.4 400.5,206.5 C401.8,203.6 408.6,191.2 410.5,187.75 C412.4,184.2 417.5,174.0 419,171.5 C420.5,169.0 424.9,163.6 425.5,162.75" fill="none" stroke="#e4819a" stroke-width="1.6" stroke-linejoin="round" stroke-linecap="round"/>
<path d="M398,216.5 L396.75,237.75" fill="none" stroke="#e4819a" stroke-width="1.6" stroke-linejoin="round" stroke-linecap="round"/>
<path d="M410.5,119 C411.4,119.6 417.6,124.2 419,125.25 C420.4,126.2 424.4,128.6 425,129" fill="none" stroke="#e4819a" stroke-width="1.6" stroke-linejoin="round" stroke-linecap="round"/>
<path d="M431,0 C431.1,1.6 431.8,13.8 432.25,16.25 C432.8,18.8 435.8,23.5 436,25 C436.2,26.5 434.6,28.8 434.75,31.25 C434.9,33.8 436.1,47.6 437.25,50 C438.4,52.4 444.8,53.5 446,55 C447.2,56.5 448.8,63.0 449.75,65 C450.8,67.0 455.1,72.8 456,75 C456.9,77.2 457.4,85.0 458.5,87.5 C459.6,90.0 466.8,98.0 467.25,100 C467.8,102.0 464.2,105.6 463.5,107.5 C462.8,109.4 460.1,117.6 459.75,118.75" fill="none" stroke="#e4819a" stroke-width="1.6" stroke-linejoin="round" stroke-linecap="round"/>
<path d="M426,37.5 L433.5,32.5" fill="none" stroke="#e4819a" stroke-width="1.6" stroke-linejoin="round" stroke-linecap="round"/>
<path d="M528.5,0 C527.8,1.0 522.0,8.4 521,10 C520.0,11.6 519.9,15.8 518.5,16.25 C517.1,16.8 508.9,14.4 507.25,15 C505.6,15.6 502.9,20.9 502.25,22.5 C501.6,24.1 501.6,29.5 501,31.25 C500.4,33.0 497.2,38.4 496,40 C494.8,41.6 489.6,45.5 488.5,47.5 C487.4,49.5 485.8,58.1 484.75,60 C483.8,61.9 479.5,64.1 478.5,66.25 C477.5,68.4 475.2,78.2 474.75,81.25 C474.2,84.2 474.2,94.4 473.5,96.25 C472.8,98.1 467.9,99.6 467.25,100" fill="none" stroke="#e4819a" stroke-width="1.6" stroke-linejoin="round" stroke-linecap="round"/>
<path d="M518.5,16.25 C519.2,16.6 524.2,18.1 526,20 C527.8,21.9 534.4,32.6 536,35 C537.6,37.4 541.2,41.6 542.25,43.75 C543.2,45.9 545.0,54.5 546,56.25 C547.0,58.0 551.4,59.9 552.25,61.25 C553.1,62.6 554.8,68.0 554.75,70 C554.8,72.0 553.1,78.9 552.25,81.25 C551.4,83.6 547.2,91.5 546,93.75 C544.8,96.0 539.9,102.1 539.75,103.75 C539.6,105.4 544.1,108.5 544.75,110 C545.4,111.5 545.9,117.9 546,118.75" fill="none" stroke="#e4819a" stroke-width="1.6" stroke-linejoin="round" stroke-linecap="round"/>
<path d="M473.5,96.25 C474.8,96.2 482.8,95.9 486,96.25 C489.2,96.6 502.2,99.2 506,100 C509.8,100.8 520.8,102.8 523.5,103.75 C526.2,104.8 531.5,109.4 533.5,110 C535.5,110.6 541.8,110.6 543.5,110 C545.2,109.4 548.0,104.9 551,103.75 C554.0,102.6 569.0,99.6 573.5,98.75 C578.0,97.9 592.9,95.4 596,95 C599.1,94.6 603.9,95.0 604.75,95" fill="none" stroke="#e4819a" stroke-width="1.6" stroke-linejoin="round" stroke-linecap="round"/>
<path d="M604.75,95 C604.9,94.5 604.9,91.2 606,90 C607.1,88.8 614.5,85.0 616,82.5 C617.5,80.0 620.2,68.2 621,65 C621.8,61.8 623.5,52.2 623.5,50 C623.5,47.8 621.0,45.0 621,42.5 C621.0,40.0 623.5,27.4 623.5,25 C623.5,22.6 620.8,21.2 621,18.75 C621.2,16.2 625.5,1.9 626,0" fill="none" stroke="#e4819a" stroke-width="1.6" stroke-linejoin="round" stroke-linecap="round"/>
<path d="M604.75,95 C604.8,96.8 605.1,110.1 604.75,112.5 C604.4,114.9 601.4,118.1 601,118.75" fill="none" stroke="#e4819a" stroke-width="1.6" stroke-linejoin="round" stroke-linecap="round"/>
<path d="M622.25,52.5 C622.9,52.2 626.9,50.6 628.5,50 C630.1,49.4 637.5,46.6 638.5,46.25" fill="none" stroke="#e4819a" stroke-width="1.6" stroke-linejoin="round" stroke-linecap="round"/>
<path d="M426,132.75 C427.2,132.6 434.2,131.6 438.5,131.5 C442.8,131.4 462.5,131.5 468.5,131.5 C474.5,131.5 493.4,130.9 498.5,131.5 C503.6,132.1 516.1,137.1 519.75,137.75 C523.4,138.4 532.9,137.1 534.75,137.75 C536.6,138.4 537.6,142.2 538.5,144 C539.4,145.8 542.4,153.1 543.5,155.25 C544.6,157.4 548.0,163.8 549.75,165.25 C551.5,166.8 558.8,169.1 561,170.25 C563.2,171.4 570.8,175.2 572.25,176.5 C573.8,177.8 574.8,181.0 576,182.75 C577.2,184.5 582.6,192.6 584.75,194 C586.9,195.4 595.0,195.0 597.25,196.5 C599.5,198.0 604.9,207.1 607.25,209 C609.6,210.9 617.9,212.4 621,215.25 C624.1,218.1 636.8,235.5 638.5,237.75" fill="none" stroke="#e4819a" stroke-width="1.6" stroke-linejoin="round" stroke-linecap="round"/>
<path d="M459.75,119 C460.1,119.8 462.5,125.0 463.5,126.5 C464.5,128.0 468.5,131.6 469.75,134 C471.0,136.4 475.4,147.4 476,150.25 C476.6,153.1 475.2,159.9 476,162.75 C476.8,165.6 483.1,176.1 483.5,179 C483.9,181.9 480.0,188.5 479.75,191.5 C479.5,194.5 480.5,206.0 481,209 C481.5,212.0 485.1,219.2 484.75,221.5 C484.4,223.8 478.0,229.9 477.25,231.5 C476.5,233.1 477.2,237.1 477.25,237.75" fill="none" stroke="#e4819a" stroke-width="1.6" stroke-linejoin="round" stroke-linecap="round"/>
<path d="M426,162.75 C427.2,161.5 436.9,152.5 438.5,150.25 C440.1,148.0 441.9,141.2 442.25,140.25" fill="none" stroke="#e4819a" stroke-width="1.6" stroke-linejoin="round" stroke-linecap="round"/>
<path d="M426,210.25 C428.5,210.8 446.2,215.1 451,215.25 C455.8,215.4 469.8,212.4 473.5,211.5 C477.2,210.6 484.2,207.2 488.5,206.5 C492.8,205.8 511.6,205.0 516,204 C520.4,203.0 529.2,197.2 532.25,196.5 C535.2,195.8 543.5,196.9 546,196.5 C548.5,196.1 555.0,193.6 557.25,192.75 C559.5,191.9 565.6,188.9 568.5,187.75 C571.4,186.6 582.0,182.2 586,181.5 C590.0,180.8 605.0,180.1 608.5,180.25 C612.0,180.4 618.0,182.4 621,182.75 C624.0,183.1 636.8,183.9 638.5,184" fill="none" stroke="#e4819a" stroke-width="1.6" stroke-linejoin="round" stroke-linecap="round"/>
<path d="M568.5,187.75 C568.6,189.6 569.0,203.0 569.75,206.5 C570.5,210.0 574.8,219.6 576,222.75 C577.2,225.9 581.6,236.2 582.25,237.75" fill="none" stroke="#e4819a" stroke-width="1.6" stroke-linejoin="round" stroke-linecap="round"/>
<path d="M551,165.25 C550.9,164.4 549.2,158.6 549.75,156.5 C550.2,154.4 555.5,146.8 556,144 C556.5,141.2 555.6,131.5 554.75,129 C553.9,126.5 548.0,120.0 547.25,119" fill="none" stroke="#e4819a" stroke-width="1.6" stroke-linejoin="round" stroke-linecap="round"/>
<path d="M568.5,181.5 C569.4,180.5 575.2,174.4 577.25,171.5 C579.2,168.6 586.9,155.5 588.5,152.75 C590.1,150.0 592.8,146.4 593.5,144 C594.2,141.6 595.5,131.5 596,129 C596.5,126.5 598.2,120.0 598.5,119" fill="none" stroke="#e4819a" stroke-width="1.6" stroke-linejoin="round" stroke-linecap="round"/>
<path d="M710.25,0 C708.6,0.4 697.0,2.9 694,3.75 C691.0,4.6 682.8,7.2 680.25,8.75 C677.8,10.2 671.2,16.5 669,18.75 C666.8,21.0 660.0,29.0 657.75,31.25 C655.5,33.5 648.4,39.9 646.5,41.25 C644.6,42.6 639.8,44.6 639,45" fill="none" stroke="#e4819a" stroke-width="1.6" stroke-linejoin="round" stroke-linecap="round"/>
<path d="M642.75,47.5 C643.0,48.8 644.6,57.8 645.25,60 C645.9,62.2 648.4,67.2 649,70 C649.6,72.8 651.0,84.5 651.5,87.5 C652.0,90.5 653.0,97.8 654,100 C655.0,102.2 660.8,108.1 661.5,110 C662.2,111.9 661.5,117.9 661.5,118.75" fill="none" stroke="#e4819a" stroke-width="1.6" stroke-linejoin="round" stroke-linecap="round"/>
<path d="M674,86.25 C675.5,86.1 685.5,86.5 689,85 C692.5,83.5 705.9,73.1 709,71.25 C712.1,69.4 718.5,67.8 720.25,66.25 C722.0,64.8 725.9,57.2 726.5,56.25" fill="none" stroke="#e4819a" stroke-width="1.6" stroke-linejoin="round" stroke-linecap="round"/>
<path d="M752.75,81.25 L761.5,82.5" fill="none" stroke="#e4819a" stroke-width="1.6" stroke-linejoin="round" stroke-linecap="round"/>
<path d="M761.5,32.5 C762.5,33.4 768.4,39.6 771.5,41.25 C774.6,42.9 790.0,47.8 792.75,48.75 C795.5,49.8 796.6,50.1 799,51.25 C801.4,52.4 814.8,59.1 816.5,60" fill="none" stroke="#e4819a" stroke-width="1.6" stroke-linejoin="round" stroke-linecap="round"/>
<path d="M819,3.75 C819.0,4.9 818.5,12.9 819,15 C819.5,17.1 823.0,23.2 824,25 C825.0,26.8 828.5,31.8 829,32.5" fill="none" stroke="#e4819a" stroke-width="1.6" stroke-linejoin="round" stroke-linecap="round"/>
<path d="M792.75,76.25 C795.1,76.5 812.9,77.9 816.5,78.75 C820.1,79.6 826.2,84.1 829,85 C831.8,85.9 841.8,87.0 844,87.5 C846.2,88.0 850.8,89.8 851.5,90" fill="none" stroke="#e4819a" stroke-width="1.6" stroke-linejoin="round" stroke-linecap="round"/>
<path d="M639,184 C640.2,183.2 649.6,178.6 651.5,176.5 C653.4,174.4 655.9,164.9 657.75,162.75 C659.6,160.6 667.4,156.4 670.25,155.25 C673.1,154.1 683.6,152.6 686.5,151.5 C689.4,150.4 696.2,145.6 699,144 C701.8,142.4 711.2,135.6 714,135.25 C716.8,134.9 723.0,139.6 726.5,140.25 C730.0,140.9 745.2,141.8 749,141.5 C752.8,141.2 761.0,138.2 764,137.75 C767.0,137.2 775.5,137.5 779,136.5 C782.5,135.5 795.8,129.5 799,127.75 C802.2,126.0 810.2,119.9 811.5,119" fill="none" stroke="#e4819a" stroke-width="1.6" stroke-linejoin="round" stroke-linecap="round"/>
<path d="M657.75,119 C657.4,121.5 654.2,139.2 654,144 C653.8,148.8 654.9,163.2 655.25,166.5 C655.6,169.8 657.9,173.8 657.75,176.5 C657.6,179.2 654.6,189.8 654,194 C653.4,198.2 652.0,214.6 651.5,219 C651.0,223.4 649.2,235.9 649,237.75" fill="none" stroke="#e4819a" stroke-width="1.6" stroke-linejoin="round" stroke-linecap="round"/>
<path d="M981.9,78.5 C982.0,79.0 983.1,82.9 983,84 C982.9,85.1 980.8,88.8 980.55,89.3" fill="none" stroke="#e4819a" stroke-width="1.6" stroke-linejoin="round" stroke-linecap="round"/>
<path d="M1053.6,200.2 C1053.8,201.0 1055.6,206.7 1056,208 C1056.4,209.3 1057.5,213.1 1057.7,213.7" fill="none" stroke="#e4819a" stroke-width="1.6" stroke-linejoin="round" stroke-linecap="round"/>
<path d="M967,178.5 L964.3,182.6" fill="none" stroke="#e4819a" stroke-width="1.6" stroke-linejoin="round" stroke-linecap="round"/>
<path d="M108.75,238 C108.6,239.8 107.4,252.5 107.5,255.5 C107.6,258.5 109.4,265.8 110,268 C110.6,270.2 113.8,276.6 113.75,278 C113.8,279.4 111.9,281.2 110,281.75 C108.1,282.2 97.2,282.4 95,283 C92.8,283.6 88.0,286.0 87.5,288 C87.0,290.0 90.0,300.2 90,303 C90.0,305.8 87.8,313.2 87.5,315.5 C87.2,317.8 87.6,322.6 87.5,325.5 C87.4,328.4 87.5,341.5 86.25,344.25 C85.0,347.0 76.5,351.8 75,353 C73.5,354.2 71.6,356.4 71.25,356.75" fill="none" stroke="#e4819a" stroke-width="1.6" stroke-linejoin="round" stroke-linecap="round"/>
<path d="M195,238 C195.2,239.2 196.5,247.8 197.5,250.5 C198.5,253.2 203.5,263.5 205,265.5 C206.5,267.5 211.8,270.0 212.5,270.5" fill="none" stroke="#e4819a" stroke-width="1.6" stroke-linejoin="round" stroke-linecap="round"/>
<path d="M290.5,250.5 C289.8,252.0 284.8,263.2 283,265.5 C281.2,267.8 275.0,271.4 273,273 C271.0,274.6 265.0,280.8 263,281.75 C261.0,282.8 254.0,282.9 253,283" fill="none" stroke="#e4819a" stroke-width="1.6" stroke-linejoin="round" stroke-linecap="round"/>
<path d="M213,270.5 C214.0,270.6 219.6,271.6 223,271.75 C226.4,271.9 243.9,271.4 246.75,271.75 C249.6,272.1 251.1,274.4 251.75,275.5 C252.4,276.6 252.9,282.2 253,283" fill="none" stroke="#e4819a" stroke-width="1.6" stroke-linejoin="round" stroke-linecap="round"/>
<path d="M310.5,251.75 C309.5,252.4 302.2,256.2 300.5,258 C298.8,259.8 294.8,266.2 293,269.25 C291.2,272.2 285.1,284.1 283,288 C280.9,291.9 273.8,304.5 271.75,308 C269.8,311.5 264.4,320.0 263,323 C261.6,326.0 258.6,334.6 258,338 C257.4,341.4 256.9,354.9 256.75,356.75" fill="none" stroke="#e4819a" stroke-width="1.6" stroke-linejoin="round" stroke-linecap="round"/>
<path d="M243,305.5 C242.5,306.2 238.9,311.0 238,313 C237.1,315.0 235.1,323.0 234.25,325.5 C233.4,328.0 230.2,334.9 229.25,338 C228.2,341.1 224.8,354.9 224.25,356.75" fill="none" stroke="#e4819a" stroke-width="1.6" stroke-linejoin="round" stroke-linecap="round"/>
<path d="M408,251.75 C407.2,252.9 402.2,261.4 400.5,263 C398.8,264.6 391.2,267.0 390.5,268 C389.8,269.0 391.2,273.2 393,273 C394.8,272.8 405.5,266.4 408,265.5 C410.5,264.6 416.3,263.9 418,264.25 C419.7,264.6 424.3,268.5 425,269" fill="none" stroke="#e4819a" stroke-width="1.6" stroke-linejoin="round" stroke-linecap="round"/>
<path d="M379.25,305.5 C380.1,305.9 386.2,309.5 388,309.25 C389.8,309.0 395.9,303.6 396.75,303" fill="none" stroke="#e4819a" stroke-width="1.6" stroke-linejoin="round" stroke-linecap="round"/>
<path d="M369.25,324.25 C368.1,325.4 359.2,333.6 358,335.5 C356.8,337.4 356.9,342.2 356.75,343" fill="none" stroke="#e4819a" stroke-width="1.6" stroke-linejoin="round" stroke-linecap="round"/>
<path d="M383,250.5 L388,256.75" fill="none" stroke="#e4819a" stroke-width="1.6" stroke-linejoin="round" stroke-linecap="round"/>
<path d="M582.25,238 C583.2,239.2 591.1,247.4 592.25,250.5 C593.4,253.6 593.0,265.5 593.5,269.25 C594.0,273.0 596.2,285.2 597.25,288 C598.2,290.8 602.9,294.2 603.5,296.75 C604.1,299.2 603.2,309.9 603.5,313 C603.8,316.1 605.5,325.2 606,328 C606.5,330.8 608.2,339.2 608.5,340.5" fill="none" stroke="#e4819a" stroke-width="1.6" stroke-linejoin="round" stroke-linecap="round"/>
<path d="M603.5,296.75 C604.5,296.1 612.0,292.2 613.5,290.5 C615.0,288.8 616.0,282.0 618.5,279.25 C621.0,276.5 636.5,264.6 638.5,263" fill="none" stroke="#e4819a" stroke-width="1.6" stroke-linejoin="round" stroke-linecap="round"/>
<path d="M601,338 C602.2,337.1 610.8,330.8 613.5,329.25 C616.2,327.8 626.0,324.1 628.5,323 C631.0,321.9 637.5,318.5 638.5,318" fill="none" stroke="#e4819a" stroke-width="1.6" stroke-linejoin="round" stroke-linecap="round"/>
<path d="M526,274.25 C526.8,275.0 532.5,279.1 533.5,281.75 C534.5,284.4 535.2,296.9 536,300.5 C536.8,304.1 540.8,314.2 541,318 C541.2,321.8 539.0,334.1 538.5,338 C538.0,341.9 536.2,354.9 536,356.75" fill="none" stroke="#e4819a" stroke-width="1.6" stroke-linejoin="round" stroke-linecap="round"/>
<path d="M426,266.75 L441,266.75" fill="none" stroke="#e4819a" stroke-width="1.6" stroke-linejoin="round" stroke-linecap="round"/>
<path d="M454.75,264.25 L463.5,263" fill="none" stroke="#e4819a" stroke-width="1.6" stroke-linejoin="round" stroke-linecap="round"/>
<path d="M426,280.5 C427.0,280.9 434.5,283.6 436,284.25 C437.5,284.9 440.5,286.5 441,286.75" fill="none" stroke="#e4819a" stroke-width="1.6" stroke-linejoin="round" stroke-linecap="round"/>
<path d="M458.5,324.25 C457.8,325.6 452.1,334.8 451,338 C449.9,341.2 447.6,354.9 447.25,356.75" fill="none" stroke="#e4819a" stroke-width="1.6" stroke-linejoin="round" stroke-linecap="round"/>
<path d="M557.25,321.75 C557.9,320.9 562.8,314.4 563.5,313 C564.2,311.6 564.0,308.5 564,308" fill="none" stroke="#e4819a" stroke-width="1.6" stroke-linejoin="round" stroke-linecap="round"/>
<path d="M647.75,240.5 C650.1,240.4 666.9,238.6 671.5,239.25 C676.1,239.9 690.2,245.6 694,246.75 C697.8,247.9 705.8,248.8 709,250.5 C712.2,252.2 722.9,261.6 726.5,264.25 C730.1,266.9 741.5,273.9 745.25,276.75 C749.0,279.6 761.8,289.9 764,293 C766.2,296.1 767.5,305.5 767.75,308 C768.0,310.5 766.4,316.2 766.5,318 C766.6,319.8 768.6,324.0 769,325.5 C769.4,327.0 769.2,331.4 770.25,333 C771.2,334.6 776.8,340.0 779,341.75 C781.2,343.5 789.2,349.6 792.75,350.5 C796.2,351.4 810.0,350.5 814,350.5 C818.0,350.5 829.6,351.0 832.75,350.5 C835.9,350.0 843.4,346.2 845.25,345.5 C847.1,344.8 850.9,343.2 851.5,343" fill="none" stroke="#e4819a" stroke-width="1.6" stroke-linejoin="round" stroke-linecap="round"/>
<path d="M639,313 C639.8,311.9 644.1,303.8 646.5,301.75 C648.9,299.8 659.1,294.4 662.75,293 C666.4,291.6 678.9,289.1 682.75,288 C686.6,286.9 698.1,283.9 701.5,281.75 C704.9,279.6 714.0,268.5 716.5,266.75 C719.0,265.0 725.5,264.5 726.5,264.25" fill="none" stroke="#e4819a" stroke-width="1.6" stroke-linejoin="round" stroke-linecap="round"/>
<path d="M639,344.25 C640.9,343.9 653.5,340.9 657.75,340.5 C662.0,340.1 678.6,340.8 681.5,340.5 C684.4,340.2 683.2,337.9 686.5,338 C689.8,338.1 710.0,341.1 714,341.75 C718.0,342.4 725.2,344.0 726.5,344.25" fill="none" stroke="#e4819a" stroke-width="1.6" stroke-linejoin="round" stroke-linecap="round"/>
<path d="M646.5,240.5 C646.8,241.9 649.8,252.0 649,254.25 C648.2,256.5 640.0,262.1 639,263" fill="none" stroke="#e4819a" stroke-width="1.6" stroke-linejoin="round" stroke-linecap="round"/>
<path d="M747.75,334.25 L755.25,325.5" fill="none" stroke="#e4819a" stroke-width="1.6" stroke-linejoin="round" stroke-linecap="round"/>
<path d="M839,350.5 L851.5,338" fill="none" stroke="#e4819a" stroke-width="1.6" stroke-linejoin="round" stroke-linecap="round"/>
<path d="M1061.75,281.3 C1062.0,282.1 1064.7,287.2 1064.4,289.4 C1064.1,291.6 1060.1,300.6 1059,303 C1057.9,305.4 1054.8,311.6 1053.6,313.8 C1052.4,316.0 1047.7,322.7 1046.9,324.6 C1046.1,326.5 1046.0,330.8 1045.5,332.7 C1045.0,334.6 1042.2,341.8 1041.4,343.5 C1040.7,345.2 1038.3,349.4 1038,350" fill="none" stroke="#e4819a" stroke-width="1.6" stroke-linejoin="round" stroke-linecap="round"/>
<path d="M979.2,320.5 C980.4,320.6 989.5,321.2 991.4,321.9 C993.3,322.6 995.4,327.0 998.1,327.3 C1000.8,327.6 1015.0,324.7 1018.4,324.6 C1021.8,324.5 1029.2,325.6 1032,326 C1034.8,326.4 1045.1,327.8 1046.9,328.7 C1048.7,329.6 1049.3,334.7 1049.6,335.4" fill="none" stroke="#e4819a" stroke-width="1.6" stroke-linejoin="round" stroke-linecap="round"/>
<path d="M977.85,320.5 C977.7,321.4 976.8,327.6 976.5,330 C976.2,332.4 975.4,342.2 975.1,344.9 C974.9,347.6 974.1,355.8 974,357" fill="none" stroke="#e4819a" stroke-width="1.6" stroke-linejoin="round" stroke-linecap="round"/>
<path d="M1067.2,238 C1067.9,239.1 1072.4,246.4 1073.9,248.8 C1075.4,251.2 1081.2,261.0 1082,262.4" fill="none" stroke="#e4819a" stroke-width="1.6" stroke-linejoin="round" stroke-linecap="round"/>
<path d="M869.6,238 C869.2,239.1 866.3,246.6 865.5,248.8 C864.7,251.0 861.8,257.6 861.5,259.65 C861.2,261.7 862.7,268.2 862.8,269.1" fill="none" stroke="#e4819a" stroke-width="1.6" stroke-linejoin="round" stroke-linecap="round"/>
<path d="M868.2,305.7 C867.9,307.1 865.9,316.8 865.5,319.2 C865.1,321.6 865.6,328.8 864.2,330 C862.9,331.2 853.2,331.3 852,331.4" fill="none" stroke="#e4819a" stroke-width="1.6" stroke-linejoin="round" stroke-linecap="round"/>
<path d="M852,344.9 C853.4,345.3 863.1,347.8 865.5,349 C867.9,350.2 875.3,356.2 876.4,357" fill="none" stroke="#e4819a" stroke-width="1.6" stroke-linejoin="round" stroke-linecap="round"/>
<path d="M912.9,357 C914.4,356.5 924.4,352.4 927.8,351.7 C931.2,351.0 942.1,350.3 946.7,350.3 C951.3,350.3 969.1,351.3 973.8,351.7 C978.5,352.1 990.3,354.4 994.1,354.4 C997.9,354.4 1008.9,352.2 1011.7,351.7 C1014.5,351.2 1021.4,349.3 1022.5,349" fill="none" stroke="#e4819a" stroke-width="1.6" stroke-linejoin="round" stroke-linecap="round"/>
<path d="M1033.3,340.8 C1034.4,341.8 1042.7,348.7 1044.2,350.3 C1045.7,351.9 1047.6,356.3 1048,357" fill="none" stroke="#e4819a" stroke-width="1.6" stroke-linejoin="round" stroke-linecap="round"/>
<path d="M1038.7,353 L1045.5,343.5" fill="none" stroke="#e4819a" stroke-width="1.6" stroke-linejoin="round" stroke-linecap="round"/>
<path d="M0,367 C1.2,367.4 10.5,369.6 12.5,370.75 C14.5,371.9 18.4,376.8 20,378.25 C21.6,379.8 27.0,385.2 28.75,385.75 C30.5,386.2 35.2,384.0 37.5,383.25 C39.8,382.5 49.0,379.5 51.25,378.25 C53.5,377.0 58.2,372.6 60,370.75 C61.8,368.9 67.6,360.9 68.75,359.5 C69.9,358.1 71.0,357.0 71.25,356.75" fill="none" stroke="#e4819a" stroke-width="1.6" stroke-linejoin="round" stroke-linecap="round"/>
<path d="M28.75,385.75 C28.8,387.0 29.1,394.9 28.75,398.25 C28.4,401.6 25.1,416.1 25,419.5 C24.9,422.9 27.4,429.2 27.5,432 C27.6,434.8 26.4,445.5 26.25,447" fill="none" stroke="#e4819a" stroke-width="1.6" stroke-linejoin="round" stroke-linecap="round"/>
<path d="M177.5,427 C178.5,426.2 185.5,420.8 187.5,419.5 C189.5,418.2 195.0,415.2 197.5,414.5 C200.0,413.8 211.0,412.2 212.5,412" fill="none" stroke="#e4819a" stroke-width="1.6" stroke-linejoin="round" stroke-linecap="round"/>
<path d="M176.25,427 C176.1,428.1 175.5,436.2 175,438.25 C174.5,440.2 171.6,446.1 171.25,447" fill="none" stroke="#e4819a" stroke-width="1.6" stroke-linejoin="round" stroke-linecap="round"/>
<path d="M223,357 C223.1,358.2 224.0,365.8 224.25,369.5 C224.5,373.2 225.1,390.8 225.5,394.5 C225.9,398.2 227.1,404.5 228,407 C228.9,409.5 233.2,417.5 234.25,419.5 C235.2,421.5 237.6,426.2 238,427" fill="none" stroke="#e4819a" stroke-width="1.6" stroke-linejoin="round" stroke-linecap="round"/>
<path d="M260.5,357 C260.8,358.0 263.4,365.1 263,367 C262.6,368.9 257.8,374.2 256.75,375.75 C255.8,377.2 253.4,381.4 253,382" fill="none" stroke="#e4819a" stroke-width="1.6" stroke-linejoin="round" stroke-linecap="round"/>
<path d="M216.75,409.5 C217.6,409.0 223.6,404.9 225.5,404.5 C227.4,404.1 234.5,405.6 235.5,405.75" fill="none" stroke="#e4819a" stroke-width="1.6" stroke-linejoin="round" stroke-linecap="round"/>
<path d="M319.25,389.5 C320.0,388.5 325.9,380.9 326.75,379.5 C327.6,378.1 327.3,376.1 328,375.75 C328.7,375.4 333.4,375.8 334,375.75" fill="none" stroke="#e4819a" stroke-width="1.6" stroke-linejoin="round" stroke-linecap="round"/>
<path d="M338,414.5 C337.9,415.2 336.4,420.2 336.75,422 C337.1,423.8 341.0,430.0 341.75,432 C342.5,434.0 343.8,441.0 344,442" fill="none" stroke="#e4819a" stroke-width="1.6" stroke-linejoin="round" stroke-linecap="round"/>
<path d="M405.5,418.25 C406.2,418.6 411.2,420.9 413,422 C414.8,423.1 422.0,428.8 423,429.5" fill="none" stroke="#e4819a" stroke-width="1.6" stroke-linejoin="round" stroke-linecap="round"/>
<path d="M243,437 C245.0,436.9 259.1,435.2 263,435.75 C266.9,436.2 279.4,440.9 281.75,442 C284.1,443.1 286.5,446.5 287,447" fill="none" stroke="#e4819a" stroke-width="1.6" stroke-linejoin="round" stroke-linecap="round"/>
<path d="M468.5,424.5 C470.5,423.9 486.0,418.9 488.5,418.25 C491.0,417.6 493.0,418.2 493.5,418.25" fill="none" stroke="#e4819a" stroke-width="1.6" stroke-linejoin="round" stroke-linecap="round"/>
<path d="M487.25,419.5 C486.9,420.8 483.8,429.9 483.5,432 C483.2,434.1 484.6,439.9 484.75,440.75" fill="none" stroke="#e4819a" stroke-width="1.6" stroke-linejoin="round" stroke-linecap="round"/>
<path d="M588.5,377 C588.2,378.2 586.8,386.5 586,389.5 C585.2,392.5 581.8,404.2 581,407 C580.2,409.8 579.5,415.5 578.5,417 C577.5,418.5 571.8,421.5 571,422" fill="none" stroke="#e4819a" stroke-width="1.6" stroke-linejoin="round" stroke-linecap="round"/>
<path d="M526,373.25 C525.4,374.9 520.2,387.3 519.75,389.5 C519.2,391.7 521.6,393.6 521,395 C520.4,396.4 515.5,401.9 513.5,403.25 C511.5,404.6 502.2,407.8 501,408.25" fill="none" stroke="#e4819a" stroke-width="1.6" stroke-linejoin="round" stroke-linecap="round"/>
<path d="M444.75,357 L442.25,369.5" fill="none" stroke="#e4819a" stroke-width="1.6" stroke-linejoin="round" stroke-linecap="round"/>
<path d="M426,398.25 L431,394" fill="none" stroke="#e4819a" stroke-width="1.6" stroke-linejoin="round" stroke-linecap="round"/>
<path d="M536,357 L536,367" fill="none" stroke="#e4819a" stroke-width="1.6" stroke-linejoin="round" stroke-linecap="round"/>
<path d="M616,388.25 C617.0,388.9 623.8,393.4 626,394.5 C628.2,395.6 637.2,399.0 638.5,399.5" fill="none" stroke="#e4819a" stroke-width="1.6" stroke-linejoin="round" stroke-linecap="round"/>
<path d="M521,434.5 L526,444.5" fill="none" stroke="#e4819a" stroke-width="1.6" stroke-linejoin="round" stroke-linecap="round"/>
<path d="M639,399.5 C641.5,399.8 659.6,402.1 664,402 C668.4,401.9 677.6,398.5 682.75,398.25 C687.9,398.0 711.1,398.6 715.25,399.5 C719.4,400.4 722.5,406.6 724,407 C725.5,407.4 729.6,403.6 730.25,403.25" fill="none" stroke="#e4819a" stroke-width="1.6" stroke-linejoin="round" stroke-linecap="round"/>
<path d="M649,402 C649.2,402.8 650.8,408.0 651.5,409.5 C652.2,411.0 655.8,415.2 656.5,417 C657.2,418.8 659.2,425.2 659,427 C658.8,428.8 655.5,432.5 654,434.5 C652.5,436.5 645.0,445.5 644,446.75" fill="none" stroke="#e4819a" stroke-width="1.6" stroke-linejoin="round" stroke-linecap="round"/>
<path d="M730.25,407 C731.1,407.5 737.8,410.5 739,412 C740.2,413.5 742.0,419.8 742.75,422 C743.5,424.2 745.9,432.0 746.5,434.5 C747.1,437.0 748.8,445.5 749,446.75" fill="none" stroke="#e4819a" stroke-width="1.6" stroke-linejoin="round" stroke-linecap="round"/>
<path d="M756.5,397 C757.2,396.8 762.6,394.5 764,394.5 C765.4,394.5 769.2,397.8 770.25,397 C771.2,396.2 772.1,388.5 774,387 C775.9,385.5 786.2,382.8 789,382 C791.8,381.2 798.8,380.5 801.5,379.5 C804.2,378.5 814.0,373.2 816.5,372 C819.0,370.8 824.8,368.5 826.5,367 C828.2,365.5 833.2,358.0 834,357" fill="none" stroke="#e4819a" stroke-width="1.6" stroke-linejoin="round" stroke-linecap="round"/>
<path d="M824,364.5 C824.5,365.8 828.0,374.0 829,377 C830.0,380.0 833.0,391.5 834,394.5 C835.0,397.5 837.5,404.8 839,407 C840.5,409.2 847.7,415.6 849,417 C850.3,418.4 851.7,420.6 852,421" fill="none" stroke="#e4819a" stroke-width="1.6" stroke-linejoin="round" stroke-linecap="round"/>
<path d="M1000.85,357 C1001.4,357.8 1004.9,364.0 1006.3,365.1 C1007.7,366.2 1012.8,367.9 1014.4,367.8 C1016.0,367.7 1020.7,364.6 1022.5,363.8 C1024.3,363.0 1031.0,360.1 1032,359.7" fill="none" stroke="#e4819a" stroke-width="1.6" stroke-linejoin="round" stroke-linecap="round"/>
<path d="M1032,359.7 C1032.0,360.8 1032.7,368.6 1032,370.5 C1031.3,372.4 1026.4,376.6 1025.2,378.65 C1024.0,380.7 1020.2,387.8 1019.8,390.8 C1019.4,393.8 1021.7,406.0 1021.15,408.4 C1020.6,410.8 1016.4,414.0 1014.4,415.2 C1012.4,416.4 1003.6,419.5 1000.85,420.6 C998.1,421.7 990.0,425.1 987.3,426 C984.6,426.9 976.5,429.1 973.8,430.1 C971.1,431.1 961.4,435.4 960,436" fill="none" stroke="#e4819a" stroke-width="1.6" stroke-linejoin="round" stroke-linecap="round"/>
<path d="M1033.3,370.5 C1033.8,371.9 1038.0,381.4 1038.7,384 C1039.4,386.6 1039.3,394.6 1040.1,396.2 C1040.9,397.8 1045.7,400.0 1046.9,400.3 C1048.1,400.6 1051.8,399.1 1052.3,399" fill="none" stroke="#e4819a" stroke-width="1.6" stroke-linejoin="round" stroke-linecap="round"/>
<path d="M1046.9,400.3 C1046.0,401.2 1038.5,407.4 1037.4,409.8 C1036.3,412.2 1036.1,423.2 1036,424.7" fill="none" stroke="#e4819a" stroke-width="1.6" stroke-linejoin="round" stroke-linecap="round"/>
<path d="M1014.4,415.2 L1014.4,430.1" fill="none" stroke="#e4819a" stroke-width="1.6" stroke-linejoin="round" stroke-linecap="round"/>
<path d="M1059,357 C1059.7,357.8 1064.3,363.9 1065.8,365.1 C1067.3,366.3 1072.3,368.5 1073.9,369.2 C1075.5,369.9 1081.2,371.6 1082,371.9" fill="none" stroke="#e4819a" stroke-width="1.6" stroke-linejoin="round" stroke-linecap="round"/>
<path d="M852,438.2 C853.4,438.6 863.6,441.4 865.5,442.25 C867.4,443.1 870.5,446.5 871,447" fill="none" stroke="#e4819a" stroke-width="1.6" stroke-linejoin="round" stroke-linecap="round"/>
<path d="M873.65,357 C874.9,357.3 883.6,359.7 885.8,359.7 C888.0,359.7 894.3,357.3 895.3,357" fill="none" stroke="#e4819a" stroke-width="1.6" stroke-linejoin="round" stroke-linecap="round"/>
<path d="M110,155 C110.0,157.0 110.1,171.5 110,175 C109.9,178.5 108.5,187.6 109,190 C109.5,192.4 114.4,195.8 115,199 C115.6,202.2 115.1,217.6 115,221.5 C114.9,225.4 114.1,236.1 114,237.75" fill="none" stroke="#e4819a" stroke-width="1.6" stroke-linejoin="round" stroke-linecap="round"/>
<path d="M157,134 C158.5,132.3 169.8,119.9 172,117 C174.2,114.1 178.2,109.2 179,105 C179.8,100.8 179.9,78.0 180,75" fill="none" stroke="#e4819a" stroke-width="1.6" stroke-linejoin="round" stroke-linecap="round"/>
<path d="M876.4,357 C877.3,357.3 883.7,359.6 885.8,359.7 C887.9,359.8 894.3,358.8 897,358.5 C899.7,358.2 911.3,357.1 912.9,357" fill="none" stroke="#e4819a" stroke-width="1.6" stroke-linejoin="round" stroke-linecap="round"/>
<path d="M638.5,237.75 L647.75,240.5" fill="none" stroke="#e4819a" stroke-width="1.6" stroke-linejoin="round" stroke-linecap="round"/>
<path d="M546,118.75 C545.8,119.4 544.2,123.1 544,125 C543.8,126.9 543.5,136.5 543.5,137.75" fill="none" stroke="#e4819a" stroke-width="1.6" stroke-linejoin="round" stroke-linecap="round"/>
<path d="M285.5,39 C287.0,37.9 297.8,29.1 300.5,27.5 C303.2,25.9 310.2,23.2 313,22.5 C315.8,21.8 325.5,20.4 328,20 C330.5,19.6 337.0,19.1 338,19" fill="none" stroke="#f0a888" stroke-width="1.1" stroke-linejoin="round" stroke-linecap="round"/>
<path d="M51,85 C50.1,86.2 43.6,94.8 42.5,97.5 C41.4,100.2 40.2,111.0 40,112.5" fill="none" stroke="#f0a888" stroke-width="1.1" stroke-linejoin="round" stroke-linecap="round"/>
<path d="M57.5,90 C58.8,91.0 68.3,97.8 70,100 C71.7,102.2 73.6,111.2 74,112.5" fill="none" stroke="#f0a888" stroke-width="1.1" stroke-linejoin="round" stroke-linecap="round"/>
<path d="M245.5,130 C247.2,129.4 260.4,125.1 263,124 C265.6,122.9 270.9,119.5 271.75,119" fill="none" stroke="#f0a888" stroke-width="1.1" stroke-linejoin="round" stroke-linecap="round"/>
<path d="M310.5,196.5 C310.2,197.5 308.5,203.7 308,206.5 C307.5,209.3 305.9,222.2 305.5,225 C305.1,227.8 304.1,233.1 304,234" fill="none" stroke="#f0a888" stroke-width="1.1" stroke-linejoin="round" stroke-linecap="round"/>
<path d="M240.5,207.75 C241.2,208.1 246.2,211.0 248,211.5 C249.8,212.0 257.0,212.6 258,212.75" fill="none" stroke="#f0a888" stroke-width="1.1" stroke-linejoin="round" stroke-linecap="round"/>
<path d="M243,191.5 C243.1,192.3 244.2,198.4 244,200 C243.8,201.6 240.8,207.0 240.5,207.75" fill="none" stroke="#f0a888" stroke-width="1.1" stroke-linejoin="round" stroke-linecap="round"/>
<path d="M543.5,176.5 L531,171.5" fill="none" stroke="#f0a888" stroke-width="1.1" stroke-linejoin="round" stroke-linecap="round"/>
<path d="M557.25,194 C557.6,195.2 561.6,203.2 561,206.5 C560.4,209.8 552.0,224.5 551,226.5" fill="none" stroke="#f0a888" stroke-width="1.1" stroke-linejoin="round" stroke-linecap="round"/>
<path d="M534.75,137.75 L547.25,125.25" fill="none" stroke="#f0a888" stroke-width="1.1" stroke-linejoin="round" stroke-linecap="round"/>
<path d="M449.75,125 C450.6,125.2 456.6,126.8 458.5,127.5 C460.4,128.2 467.5,131.1 468.5,131.5" fill="none" stroke="#f0a888" stroke-width="1.1" stroke-linejoin="round" stroke-linecap="round"/>
<path d="M829,32.5 C830.0,33.5 837.0,40.1 839,42.5 C841.0,44.9 848.0,54.9 849,56.25" fill="none" stroke="#e98a5e" stroke-width="1.7" stroke-linejoin="round" stroke-linecap="round"/>
<path d="M832.75,70 C833.6,71.0 840.1,78.2 841.5,80 C842.9,81.8 846.0,86.8 846.5,87.5" fill="none" stroke="#e98a5e" stroke-width="1.7" stroke-linejoin="round" stroke-linecap="round"/>
<path d="M851.5,92.5 C850.2,93.2 841.5,98.4 839,100 C836.5,101.6 829.0,107.1 826.5,108.75 C824.0,110.4 815.2,115.5 814,116.25" fill="none" stroke="#e98a5e" stroke-width="1.7" stroke-linejoin="round" stroke-linecap="round"/>
<path d="M774,27.5 C775.5,27.2 786.5,25.1 789,25 C791.5,24.9 797.2,27.5 799,26.25 C800.8,25.0 805.9,14.4 806.5,12.5 C807.1,10.6 805.1,7.5 805,7" fill="none" stroke="#f0a888" stroke-width="1.1" stroke-linejoin="round" stroke-linecap="round"/>
<path d="M845.25,119 C843.4,121.5 828.1,139.8 826.5,144 C824.9,148.2 829.1,158.4 829,161.5 C828.9,164.6 825.4,172.5 825.25,175.25 C825.1,178.0 826.9,186.9 827.75,189 C828.6,191.1 833.4,195.8 834,196.5" fill="none" stroke="#e98a5e" stroke-width="1.7" stroke-linejoin="round" stroke-linecap="round"/>
<path d="M717.75,196.5 C716.1,197.8 704.6,207.5 701.5,209 C698.4,210.5 689.1,212.0 686.5,211.5 C683.9,211.0 677.2,203.5 675.25,204 C673.2,204.5 667.6,214.4 666.5,216.5 C665.4,218.6 665.5,223.8 664,225.25 C662.5,226.8 652.8,230.9 651.5,231.5" fill="none" stroke="#f0a888" stroke-width="1.1" stroke-linejoin="round" stroke-linecap="round"/>
<path d="M922.4,0 C922.4,1.6 922.9,14.0 922.4,16.2 C921.9,18.4 918.5,19.8 917,21.65 C915.5,23.5 909.1,32.2 907.5,35.2 C905.9,38.2 902.7,48.1 900.7,51.4 C898.7,54.6 889.4,64.7 887.2,67.7 C885.0,70.7 880.3,79.3 879.1,81.2 C877.9,83.1 875.4,86.1 875,86.6" fill="none" stroke="#e98a5e" stroke-width="1.7" stroke-linejoin="round" stroke-linecap="round"/>
<path d="M875,86.6 C876.8,86.1 888.8,81.5 892.6,81.2 C896.4,80.9 907.5,83.8 912.9,83.9 C918.3,84.0 940.6,82.8 946.7,82.5 C952.8,82.2 970.4,81.5 973.8,81.2 C977.2,80.9 978.9,79.8 980.55,79.8 C982.2,79.8 988.6,79.8 990,81.2 C991.4,82.6 993.0,91.8 994.1,93.4 C995.2,95.0 1000.2,97.0 1000.85,97.4" fill="none" stroke="#e98a5e" stroke-width="1.7" stroke-linejoin="round" stroke-linecap="round"/>
<path d="M980.55,79.8 C980.7,78.6 981.0,70.1 981.9,67.7 C982.8,65.3 988.9,57.3 990,55.5 C991.1,53.7 992.4,50.5 992.7,50" fill="none" stroke="#e98a5e" stroke-width="1.7" stroke-linejoin="round" stroke-linecap="round"/>
<path d="M872.3,100.1 C873.5,100.9 882.5,106.4 884.5,108.25 C886.5,110.1 891.8,117.9 892.6,119" fill="none" stroke="#e98a5e" stroke-width="1.7" stroke-linejoin="round" stroke-linecap="round"/>
<path d="M852,94.7 C853.4,95.5 863.3,101.8 865.5,102.8 C867.7,103.8 872.8,104.1 873.65,104.2" fill="none" stroke="#e98a5e" stroke-width="1.7" stroke-linejoin="round" stroke-linecap="round"/>
<path d="M852,65 C852.8,65.7 858.8,70.4 860.1,71.7 C861.5,73.0 865.0,77.8 865.5,78.5" fill="none" stroke="#e98a5e" stroke-width="1.7" stroke-linejoin="round" stroke-linecap="round"/>
<path d="M892.6,119 C894.5,120.6 908.2,131.7 911.5,135.2 C914.8,138.7 922.1,151.4 925.1,154.2 C928.1,157.0 938.6,162.3 941.3,163.65 C944.0,165.0 949.4,166.2 952.1,167.7 C954.8,169.2 964.9,176.9 968.4,178.5 C971.9,180.1 983.2,182.5 987.3,184 C991.4,185.5 1005.8,191.8 1009,193.4 C1012.2,195.0 1016.8,198.7 1019.8,200.2 C1022.8,201.7 1035.7,207.0 1038.7,208.3 C1041.7,209.7 1047.7,213.2 1049.6,213.7 C1051.5,214.2 1054.5,213.8 1057.7,213.7 C1060.9,213.6 1079.6,212.5 1082,212.4" fill="none" stroke="#e98a5e" stroke-width="1.7" stroke-linejoin="round" stroke-linecap="round"/>
<path d="M881.8,165 C882.3,166.9 886.7,179.9 887.2,184 C887.7,188.1 888.3,201.8 887.2,205.6 C886.1,209.4 878.3,218.8 876.4,221.8 C874.5,224.8 869.0,234.0 868.2,235.4" fill="none" stroke="#e98a5e" stroke-width="1.7" stroke-linejoin="round" stroke-linecap="round"/>
<path d="M1057.7,213.7 C1057.3,215.1 1054.1,224.8 1053.6,227.25 C1053.1,229.7 1052.4,236.9 1052.3,238" fill="none" stroke="#e98a5e" stroke-width="1.7" stroke-linejoin="round" stroke-linecap="round"/>
<path d="M1060.4,216.4 L1064.4,238" fill="none" stroke="#e98a5e" stroke-width="1.7" stroke-linejoin="round" stroke-linecap="round"/>
<path d="M1.25,288 C1.9,288.2 5.1,290.5 7.5,290.5 C9.9,290.5 22.0,288.9 25,288 C28.0,287.1 34.4,282.5 37.5,281.75 C40.6,281.0 53.0,280.5 56.25,280.5 C59.5,280.5 66.9,281.1 70,281.75 C73.1,282.4 85.8,286.2 87.5,286.75" fill="none" stroke="#f0a888" stroke-width="1.1" stroke-linejoin="round" stroke-linecap="round"/>
<path d="M110,281.75 C110.2,282.6 111.9,288.6 112.5,290.5 C113.1,292.4 115.5,298.2 116.25,300.5 C117.0,302.8 119.6,310.8 120,313 C120.4,315.2 119.0,321.2 120,323 C121.0,324.8 128.2,328.4 130,330.5 C131.8,332.6 136.1,341.6 137.5,344.25 C138.9,346.9 143.1,355.5 143.75,356.75" fill="none" stroke="#f0a888" stroke-width="1.1" stroke-linejoin="round" stroke-linecap="round"/>
<path d="M130,294.25 C132.0,294.6 145.5,298.1 150,298 C154.5,297.9 171.5,294.6 175,293 C178.5,291.4 181.2,284.0 185,281.75 C188.8,279.5 209.8,271.6 212.5,270.5" fill="none" stroke="#f0a888" stroke-width="1.1" stroke-linejoin="round" stroke-linecap="round"/>
<path d="M147.5,298 C148.8,299.0 157.2,305.5 160,308 C162.8,310.5 172.6,319.8 175,323 C177.4,326.2 182.6,338.8 183.75,340.5 C184.9,342.2 186.7,340.5 187,340.5" fill="none" stroke="#f0a888" stroke-width="1.1" stroke-linejoin="round" stroke-linecap="round"/>
<path d="M120,345.5 L135,348" fill="none" stroke="#f0a888" stroke-width="1.1" stroke-linejoin="round" stroke-linecap="round"/>
<path d="M213,305.5 C214.5,305.2 225.0,303.0 228,303 C231.0,303.0 241.5,305.2 243,305.5" fill="none" stroke="#f0a888" stroke-width="1.1" stroke-linejoin="round" stroke-linecap="round"/>
<path d="M250.5,308 C249.8,309.8 244.6,323.0 243,325.5 C241.4,328.0 235.1,332.2 234.25,333" fill="none" stroke="#f0a888" stroke-width="1.1" stroke-linejoin="round" stroke-linecap="round"/>
<path d="M265.5,298 C266.2,298.5 271.2,300.5 273,303 C274.8,305.5 281.6,319.6 283,323 C284.4,326.4 286.4,335.4 286.75,336.75" fill="none" stroke="#f0a888" stroke-width="1.1" stroke-linejoin="round" stroke-linecap="round"/>
<path d="M333,249.25 C334.4,249.4 344.8,249.4 346.75,250.5 C348.8,251.6 350.6,258.6 353,260.5 C355.4,262.4 367.8,269.2 370.5,269.25 C373.2,269.2 379.1,262.4 380.5,260.5 C381.9,258.6 383.2,252.8 384.25,250.5 C385.2,248.2 389.9,239.2 390.5,238" fill="none" stroke="#e98a5e" stroke-width="1.7" stroke-linejoin="round" stroke-linecap="round"/>
<path d="M371.75,269.25 C371.2,270.9 367.9,282.6 366.75,285.5 C365.6,288.4 361.2,296.0 360.5,298 C359.8,300.0 360.8,303.2 359.25,305.5 C357.8,307.8 347.6,318.0 345.5,320.5 C343.4,323.0 338.9,328.1 338,330.5 C337.1,332.9 337.4,341.6 336.75,344.25 C336.1,346.9 332.2,355.5 331.75,356.75" fill="none" stroke="#e98a5e" stroke-width="1.7" stroke-linejoin="round" stroke-linecap="round"/>
<path d="M426,293 C426.4,293.8 427.9,299.1 429.75,300.5 C431.6,301.9 442.6,305.5 444.75,306.75 C446.9,308.0 448.4,312.4 451,313 C453.6,313.6 468.2,312.9 471,313 C473.8,313.1 476.8,313.9 478.5,314.25 C480.2,314.6 486.2,316.2 488.5,316.75 C490.8,317.2 498.8,318.9 501,319.25 C503.2,319.6 508.5,320.5 511,320.5 C513.5,320.5 522.6,319.2 526,319.25 C529.4,319.2 541.6,320.2 544.75,320.5 C547.9,320.8 554.4,320.1 557.25,321.75 C560.1,323.4 570.4,334.1 573.5,336.75 C576.6,339.4 586.5,346.0 588.5,348 C590.5,350.0 593.0,355.9 593.5,356.75" fill="none" stroke="#e98a5e" stroke-width="1.7" stroke-linejoin="round" stroke-linecap="round"/>
<path d="M478.5,238 C478.4,239.5 477.0,250.5 477.25,253 C477.5,255.5 480.9,260.8 481,263 C481.1,265.2 478.5,273.0 478.5,275.5 C478.5,278.0 481.2,285.8 481,288 C480.8,290.2 477.2,296.2 476,298 C474.8,299.8 469.2,303.8 468.5,305.5 C467.8,307.2 468.5,312.8 468.5,315.5 C468.5,318.2 468.1,328.9 468.5,333 C468.9,337.1 471.9,354.4 472.25,356.75" fill="none" stroke="#e98a5e" stroke-width="1.7" stroke-linejoin="round" stroke-linecap="round"/>
<path d="M697.75,238 C697.8,240.0 697.4,254.0 697.75,258 C698.1,262.0 701.1,276.0 701.5,278" fill="none" stroke="#f0a888" stroke-width="1.1" stroke-linejoin="round" stroke-linecap="round"/>
<path d="M649,254.25 C649.6,256.1 653.9,269.1 655.25,273 C656.6,276.9 662.0,291.0 662.75,293" fill="none" stroke="#f0a888" stroke-width="1.1" stroke-linejoin="round" stroke-linecap="round"/>
<path d="M965.7,321.9 L977.85,320.5" fill="none" stroke="#f0a888" stroke-width="1.1" stroke-linejoin="round" stroke-linecap="round"/>
<path d="M1007.6,286.7 C1007.7,287.9 1008.2,296.2 1009,298.9 C1009.8,301.6 1014.8,311.2 1015.7,313.8 C1016.6,316.4 1018.1,323.5 1018.4,324.6" fill="none" stroke="#f0a888" stroke-width="1.1" stroke-linejoin="round" stroke-linecap="round"/>
<path d="M1052.3,238 L1049.6,244.8" fill="none" stroke="#f0a888" stroke-width="1.1" stroke-linejoin="round" stroke-linecap="round"/>
<path d="M146.25,357 C146.9,357.8 152.0,362.9 152.5,364.5 C153.0,366.1 152.4,371.4 151.25,373.25 C150.1,375.1 142.2,382.2 141.25,383.25" fill="none" stroke="#f0a888" stroke-width="1.1" stroke-linejoin="round" stroke-linecap="round"/>
<path d="M151.25,373.25 C151.8,374.1 155.4,380.5 156.25,382 C157.1,383.5 159.6,387.6 160,388.25" fill="none" stroke="#f0a888" stroke-width="1.1" stroke-linejoin="round" stroke-linecap="round"/>
<path d="M133.75,394.5 C134.1,395.8 136.6,404.8 137.5,407 C138.4,409.2 141.2,415.5 142.5,417 C143.8,418.5 148.0,420.8 150,422 C152.0,423.2 160.0,428.6 162.5,429.5 C165.0,430.4 173.0,430.4 175,430.75 C177.0,431.1 181.2,432.1 182.5,433.25 C183.8,434.4 187.0,441.1 187.5,442" fill="none" stroke="#f0a888" stroke-width="1.1" stroke-linejoin="round" stroke-linecap="round"/>
<path d="M212.5,389.5 L205,404.5" fill="none" stroke="#f0a888" stroke-width="1.1" stroke-linejoin="round" stroke-linecap="round"/>
<path d="M279.25,359.5 C278.1,360.5 269.7,368.1 268,369.5 C266.3,370.9 262.6,372.6 262,373" fill="none" stroke="#f0a888" stroke-width="1.1" stroke-linejoin="round" stroke-linecap="round"/>
<path d="M331.75,357 C332.1,358.5 335.0,369.2 335.5,372 C336.0,374.8 335.5,382.6 336.75,384.5 C338.0,386.4 346.2,389.1 348,390.75 C349.8,392.4 352.9,399.0 354.25,400.75 C355.6,402.5 359.6,407.0 361.75,408.25 C363.9,409.5 374.1,412.8 375.5,413.25" fill="none" stroke="#e98a5e" stroke-width="1.7" stroke-linejoin="round" stroke-linecap="round"/>
<path d="M346.75,409.5 C347.8,408.6 354.2,402.0 356.75,400.75 C359.2,399.5 368.8,396.4 371.75,397 C374.8,397.6 385.2,406.0 386.75,407" fill="none" stroke="#e98a5e" stroke-width="1.7" stroke-linejoin="round" stroke-linecap="round"/>
<path d="M294.25,387 C296.1,387.4 310.5,390.5 313,390.75 C315.5,391.0 318.6,389.6 319.25,389.5" fill="none" stroke="#f0a888" stroke-width="1.1" stroke-linejoin="round" stroke-linecap="round"/>
<path d="M385.5,422 C384.8,422.8 380.2,428.4 378,429.5 C375.8,430.6 365.8,432.4 363,433.25 C360.2,434.1 351.8,437.8 350.5,438.25" fill="none" stroke="#e98a5e" stroke-width="1.7" stroke-linejoin="round" stroke-linecap="round"/>
<path d="M328,442 L330,447" fill="none" stroke="#f0a888" stroke-width="1.1" stroke-linejoin="round" stroke-linecap="round"/>
<path d="M473.5,375.75 C474.5,375.4 480.8,372.5 483.5,372 C486.2,371.5 496.8,370.8 501,370.75 C505.2,370.8 522.2,372.2 526,372 C529.8,371.8 533.8,369.1 538.5,368.25 C543.2,367.4 570.0,363.8 573.5,363.25" fill="none" stroke="#e98a5e" stroke-width="1.7" stroke-linejoin="round" stroke-linecap="round"/>
<path d="M473.5,377 C473.1,377.8 471.1,382.5 469.75,384.5 C468.4,386.5 461.6,394.5 459.75,397 C457.9,399.5 452.9,407.5 451,409.5 C449.1,411.5 442.4,415.2 441,417 C439.6,418.8 437.8,425.0 437.25,427 C436.8,429.0 436.0,435.0 436,437 C436.0,439.0 437.1,446.0 437.25,447" fill="none" stroke="#e98a5e" stroke-width="1.7" stroke-linejoin="round" stroke-linecap="round"/>
<path d="M473.5,377 C474.2,378.0 479.4,384.2 481,387 C482.6,389.8 488.5,401.4 489.75,404.5 C491.0,407.6 491.8,416.2 493.5,418.25 C495.2,420.2 504.6,423.8 507.25,424.5 C509.9,425.2 518.4,424.8 519.75,425.75 C521.1,426.8 520.9,433.6 521,434.5" fill="none" stroke="#e98a5e" stroke-width="1.7" stroke-linejoin="round" stroke-linecap="round"/>
<path d="M780.25,0 C780.1,0.8 779.6,6.0 779,7.5 C778.4,9.0 775.2,14.9 774,15 C772.8,15.1 768.0,8.6 766.5,8.75 C765.0,8.9 760.5,15.2 759,16.25 C757.5,17.2 752.5,17.6 751.5,18.75 C750.5,19.9 750.6,26.4 749,27.5 C747.4,28.6 737.2,28.5 735.25,30 C733.2,31.5 730.9,41.9 729,42.5 C727.1,43.1 718.8,36.4 716.5,36.25 C714.2,36.1 708.0,40.7 706.5,41.25 C705.0,41.8 702.8,41.3 701,41.6 C699.2,41.9 690.0,43.4 688.4,44.2 C686.8,45.0 686.0,48.7 685,50 C684.0,51.3 679.5,55.3 678.3,56.8 C677.1,58.3 674.0,63.4 673.2,65.2 C672.4,67.0 671.2,74.2 670.7,75.3 C670.2,76.4 668.6,76.8 668.2,76.2 C667.8,75.6 667.0,70.8 666.5,69.4 C666.0,68.1 663.9,64.1 663.1,62.7 C662.3,61.3 659.9,55.9 658.9,55.1 C657.9,54.3 653.8,53.7 653,54.3 C652.2,54.9 650.7,59.8 650.5,61 C650.3,62.2 650.5,64.8 651.3,66 C652.1,67.2 657.2,71.3 658.05,72.8 C658.9,74.3 659.3,79.9 659.7,81.2 C660.1,82.5 661.6,85.5 662.3,86.3 C663.0,87.1 665.6,88.8 666.5,89.6 C667.4,90.4 670.1,93.7 671.5,94.7 C672.9,95.7 678.6,98.9 680,99.7 C681.4,100.5 684.4,102.2 685,103.1 C685.6,104.0 685.4,107.4 685.8,109 C686.2,110.6 688.7,117.8 689,118.75" fill="none" stroke="#a596a8" stroke-width="2.3" stroke-linejoin="round"/>
<path d="M689,118.75 C688.9,118.8 688.4,118.2 687.75,119 C687.1,119.8 683.8,125.0 682.75,126.5 C681.8,128.0 677.9,132.4 677.75,134 C677.6,135.6 680.4,141.4 681.5,142.75 C682.6,144.1 688.0,146.4 689,147.75 C690.0,149.1 690.5,154.6 691.5,156.5 C692.5,158.4 698.1,164.4 699,166.5 C699.9,168.6 699.2,175.8 700.25,177.75 C701.2,179.8 707.6,185.1 709,186.5 C710.4,187.9 712.5,191.0 714,191.5 C715.5,192.0 722.1,190.8 724,191.5 C725.9,192.2 731.2,197.5 732.75,199 C734.2,200.5 737.6,204.8 739,206.5 C740.4,208.2 745.5,215.0 746.5,216.5 C747.5,218.0 747.8,220.8 749,221.5 C750.2,222.2 757.2,223.0 759,224 C760.8,225.0 765.5,230.1 766.5,231.5 C767.5,232.9 768.8,237.1 769,237.75" fill="none" stroke="#a596a8" stroke-width="2.3" stroke-linejoin="round"/>
<path d="M767.75,238 C767.9,238.4 768.1,240.9 769,241.75 C769.9,242.6 774.6,246.2 776.5,246.75 C778.4,247.2 786.2,246.0 787.75,246.75 C789.2,247.5 790.4,253.4 791.5,254.25 C792.6,255.1 798.0,254.8 799,255.5 C800.0,256.2 800.9,260.2 801.5,261.75 C802.1,263.2 803.8,269.1 805.25,270.5 C806.8,271.9 814.5,274.2 816.5,275.5 C818.5,276.8 824.4,281.5 825.25,283 C826.1,284.5 824.4,289.2 825.25,290.5 C826.1,291.8 832.1,294.9 834,295.5 C835.9,296.1 842.2,296.4 844,296.75 C845.8,297.1 850.8,299.0 851.5,299.25" fill="none" stroke="#a596a8" stroke-width="2.3" stroke-linejoin="round"/>
<path d="M805.25,270.5 C805.2,271.6 805.1,279.8 805.25,281.75 C805.4,283.8 806.8,288.6 806.5,290.5 C806.2,292.4 803.8,299.0 802.75,300.5 C801.8,302.0 798.1,305.6 796.5,305.5 C794.9,305.4 788.4,300.2 786.5,299.25 C784.6,298.2 779.2,295.4 777.75,295.5 C776.2,295.6 772.1,299.0 771.5,300.5 C770.9,302.0 771.6,308.6 771.5,310.5 C771.4,312.4 770.6,317.8 770.25,319.25 C769.9,320.8 768.9,324.1 767.75,325.5 C766.6,326.9 760.9,331.9 759,333 C757.1,334.1 751.5,336.1 749,336.75 C746.5,337.4 736.2,338.2 734,339.25 C731.8,340.2 728.0,345.6 726.5,346.75 C725.0,347.9 720.2,349.5 719,350.5 C717.8,351.5 714.5,356.1 714,356.75" fill="none" stroke="#a596a8" stroke-width="2.3" stroke-linejoin="round"/>
<path d="M852,300.25 C853.1,299.2 860.4,290.2 862.8,289.4 C865.2,288.6 874.1,291.4 876.4,292.1 C878.7,292.8 884.6,297.3 885.8,296.2 C887.0,295.1 887.5,283.9 888.5,281.3 C889.5,278.7 893.3,271.4 895.3,270.5 C897.3,269.6 907.3,273.7 908.8,271.8 C910.3,269.9 909.9,254.9 910.2,251.5 C910.5,248.1 911.4,239.3 911.5,238" fill="none" stroke="#a596a8" stroke-width="2.3" stroke-linejoin="round"/>
<path d="M957.55,250.2 C957.7,250.3 957.7,250.8 958.9,251.5 C960.1,252.2 966.9,256.4 969.7,256.9 C972.5,257.4 984.5,256.2 987.3,256.9 C990.1,257.6 996.1,262.2 998.1,263.7 C1000.1,265.2 1005.3,270.7 1007.6,271.8 C1009.9,272.9 1018.3,274.1 1021.15,274.5 C1024.0,274.9 1033.7,276.7 1036,275.9 C1038.3,275.1 1042.6,267.3 1044.2,266.4 C1045.8,265.4 1050.4,265.9 1052.3,266.4 C1054.2,266.9 1061.6,270.7 1063.1,271.8 C1064.6,272.9 1065.3,276.5 1067.2,277.2 C1069.1,277.9 1080.5,278.5 1082,278.6" fill="none" stroke="#a596a8" stroke-width="2.3" stroke-linejoin="round"/>
<path d="M1082,311 C1081.7,311.8 1079.4,317.6 1079.3,319.2 C1079.2,320.8 1080.6,326.5 1080.7,327.3" fill="none" stroke="#a596a8" stroke-width="2.3" stroke-linejoin="round"/>
<path d="M243,434.5 C244.1,434.2 251.6,432.2 254.25,432 C256.9,431.8 266.9,431.6 269.25,432 C271.6,432.4 275.9,435.9 278,435.75 C280.1,435.6 288.2,431.6 290.5,430.75 C292.8,429.9 298.2,426.9 300.5,427 C302.8,427.1 311.4,430.9 313,432 C314.6,433.1 316.8,436.8 316.75,438.25 C316.8,439.8 313.4,446.1 313,447" fill="none" stroke="#a596a8" stroke-width="2.3" stroke-linejoin="round"/>
<path d="M243,434.5 C242.2,434.6 237.3,435.2 235,436 C232.7,436.8 223.5,441.4 220,442.5 C216.5,443.6 202.0,446.6 200,447" fill="none" stroke="#a596a8" stroke-width="2.3" stroke-linejoin="round"/>
<path d="M586,447 C586.9,446.5 593.0,443.2 594.75,442 C596.5,440.8 601.9,435.6 603.5,434.5 C605.1,433.4 608.8,431.2 611,430.75 C613.2,430.2 623.9,429.9 626,429.5 C628.1,429.1 631.0,427.4 632.25,427 C633.5,426.6 637.9,425.9 638.5,425.75" fill="none" stroke="#a596a8" stroke-width="2.3" stroke-linejoin="round"/>
<path d="M711.5,357 C711.2,357.8 708.8,363.0 709,364.5 C709.2,366.0 712.9,370.5 714,372 C715.1,373.5 719.0,378.1 720.25,379.5 C721.5,380.9 725.5,384.4 726.5,385.75 C727.5,387.1 730.2,391.4 730.25,393.25 C730.2,395.1 727.1,402.6 726.5,404.5 C725.9,406.4 723.5,411.0 724,412 C724.5,413.0 730.0,413.5 731.5,414.5 C733.0,415.5 738.4,420.2 739,422 C739.6,423.8 738.1,430.2 737.75,432 C737.4,433.8 736.4,438.4 735.25,439.5 C734.1,440.6 728.4,443.6 726.5,443.25 C724.6,442.9 717.9,437.4 716.5,435.75 C715.1,434.1 713.5,428.6 712.75,427 C712.0,425.4 710.8,420.2 709,419.5 C707.2,418.8 697.5,419.0 695.25,419.5 C693.0,420.0 688.1,424.8 686.5,424.5 C684.9,424.2 681.0,417.9 679,417 C677.0,416.1 668.0,416.4 666.5,415.75 C665.0,415.1 664.9,410.8 664,410.75 C663.1,410.8 658.2,414.1 657.75,415.75 C657.2,417.4 660.9,425.9 659,427 C657.1,428.1 642.3,426.8 639,427 C635.7,427.2 627.3,429.2 626,429.5" fill="none" stroke="#a596a8" stroke-width="2.3" stroke-linejoin="round"/>
<path d="M110,0 C110.5,0.8 113.8,6.5 115,7.5 C116.2,8.5 122.0,8.8 122.5,10 C123.0,11.2 120.5,17.2 120,19 C119.5,20.8 116.6,26.3 117.5,27.5 C118.4,28.7 127.2,30.0 128.75,31 C130.2,32.0 131.9,35.6 132.5,37.5 C133.1,39.4 135.2,48.1 135,50 C134.8,51.9 131.5,54.8 130,56 C128.5,57.2 121.5,61.4 120,62.5 C118.5,63.6 115.4,66.2 115,67.5 C114.6,68.8 116.5,74.0 116,75 C115.5,76.0 110.6,76.0 110,77.5 C109.4,79.0 109.8,87.8 110,90 C110.2,92.2 111.6,98.0 112.5,100 C113.4,102.0 117.5,108.1 118.75,110 C120.0,111.9 123.4,117.8 125,119 C126.6,120.2 133.0,121.2 135,122 C137.0,122.8 144.0,124.9 145,126.5 C146.0,128.1 145.8,136.0 145,138 C144.2,140.0 138.8,144.7 137.5,146.5 C136.2,148.3 133.0,155.0 132.5,156.5 C132.0,158.0 133.2,160.0 132.5,161.5 C131.8,163.0 125.0,170.2 125,171.5 C125.0,172.8 131.2,173.8 132.5,174 C133.8,174.2 136.0,173.5 137.5,174 C139.0,174.5 146.2,177.5 147.5,179 C148.8,180.5 150.0,187.0 151,189 C152.0,191.0 156.3,197.0 157.5,199 C158.7,201.0 160.8,207.9 162.5,209 C164.2,210.1 172.5,210.0 175,210 C177.5,210.0 185.5,207.8 187.5,209 C189.5,210.2 192.4,220.2 195,221.5 C197.6,222.8 209.7,222.2 213,221.5 C216.3,220.8 225.5,215.2 228,215 C230.5,214.8 236.4,217.6 238,219 C239.6,220.4 242.1,227.8 244,229 C245.9,230.2 254.2,231.2 256.75,231.5 C259.2,231.8 266.9,231.2 269,231.5 C271.1,231.8 276.6,233.3 278,234 C279.4,234.7 281.5,237.2 283,238 C284.5,238.8 292.2,240.1 293,241.75 C293.8,243.4 291.2,251.9 290.5,254.25 C289.8,256.6 286.9,263.6 285.5,265.5 C284.1,267.4 278.2,271.2 276.75,273 C275.2,274.8 271.9,280.6 270.5,283 C269.1,285.4 264.0,294.2 263,296.75 C262.0,299.2 261.1,305.9 260.5,308 C259.9,310.1 257.4,315.5 256.75,318 C256.1,320.5 255.1,330.4 254.25,333 C253.4,335.6 249.1,341.9 248,344.25 C246.9,346.6 243.8,354.7 243,356.75 C242.2,358.8 240.2,362.5 240.5,364.5 C240.8,366.5 245.4,374.5 245.5,377 C245.6,379.5 242.5,386.8 241.75,389.5 C241.0,392.2 238.2,402.1 238,404.5 C237.8,406.9 239.4,411.5 239.25,413.25 C239.1,415.0 236.4,420.6 236.75,422 C237.1,423.4 242.4,425.8 243,427 C243.6,428.2 243.0,433.8 243,434.5" fill="none" stroke="#a596a8" stroke-width="2.3" stroke-linejoin="round"/>
<path d="M116,75 C114.4,75.0 102.1,74.5 100,75 C97.9,75.5 96.2,78.5 95,80 C93.8,81.5 88.9,87.8 87.5,90 C86.1,92.2 82.2,100.0 81,102.5 C79.8,105.0 76.3,113.0 76,115 C75.7,117.0 77.5,120.3 78,122 C78.5,123.7 80.0,129.6 81,131.5 C82.0,133.4 86.6,139.7 87.5,141.5 C88.4,143.3 90.0,148.5 90,150 C90.0,151.5 88.0,155.3 87.5,156.5 C87.0,157.7 85.8,160.8 85,161.5 C84.2,162.2 80.5,163.8 80,164" fill="none" stroke="#a596a8" stroke-width="2.3" stroke-linejoin="round"/>
<path d="M0,130 C0.8,129.9 5.9,128.7 7.5,129 C9.1,129.3 14.5,131.8 16,133 C17.5,134.2 20.9,140.4 22.5,141.5 C24.1,142.6 31.0,143.0 32.5,144 C34.0,145.0 36.0,150.0 37.5,151.5 C39.0,153.0 46.2,157.2 47.5,159 C48.8,160.8 49.1,167.9 50,169 C50.9,170.1 54.5,170.4 56,170 C57.5,169.6 63.4,165.7 65,165 C66.7,164.3 71.0,163.1 72.5,163 C74.0,162.9 77.8,163.2 80,164 C82.2,164.8 93.0,170.2 95,171.5 C97.0,172.8 98.5,176.2 100,176.5 C101.5,176.8 108.1,175.5 110,175 C111.9,174.5 117.5,171.8 119,171.5 C120.5,171.2 124.4,171.5 125,171.5" fill="none" stroke="#a596a8" stroke-width="2.3" stroke-linejoin="round"/>
<path d="M1041.4,420.6 C1042.2,419.5 1047.8,411.0 1049.6,409.8 C1051.4,408.6 1057.4,408.3 1059,408.4 C1060.6,408.5 1064.7,410.2 1065.8,411.1 C1066.9,412.1 1068.6,417.2 1069.9,417.9 C1071.2,418.6 1078.1,418.3 1079.3,417.9 C1080.5,417.5 1081.7,414.2 1082,413.8" fill="none" stroke="#a596a8" stroke-width="2.3" stroke-linejoin="round"/>
<path d="M1041.4,420.6 C1042.8,421.0 1053.0,423.9 1055,424.7 C1057.0,425.5 1061.1,428.3 1061.75,428.7" fill="none" stroke="#a596a8" stroke-width="2.3" stroke-linejoin="round"/>
<path d="M990,0 C991.4,1.4 1001.2,12.7 1003.6,13.5 C1006.0,14.3 1012.2,8.9 1014.4,8.1 C1016.6,7.3 1023.2,5.4 1025.2,5.4 C1027.2,5.4 1032.9,6.9 1034.7,8.1 C1036.5,9.3 1042.5,15.7 1042.8,17.6 C1043.1,19.5 1039.0,25.6 1037.4,27.1 C1035.8,28.6 1028.0,31.1 1026.55,32.5 C1025.1,33.9 1021.6,38.7 1022.5,40.6 C1023.4,42.5 1033.6,49.4 1036,51.4 C1038.4,53.4 1045.0,58.7 1046.9,60.9 C1048.8,63.1 1053.4,70.8 1055,73.1 C1056.6,75.4 1061.2,83.6 1063.1,83.9 C1065.0,84.2 1072.0,77.1 1073.9,75.8 C1075.8,74.5 1081.2,70.9 1082,70.4" fill="none" stroke="#98a596" stroke-width="2.2" stroke-linejoin="round"/>
<circle cx="243" cy="50.7" r="1.9" fill="#fff" stroke="#555" stroke-width="0.9"/>
<circle cx="157.5" cy="134" r="1.9" fill="#fff" stroke="#555" stroke-width="0.9"/>
<circle cx="258.7" cy="178" r="1.9" fill="#fff" stroke="#555" stroke-width="0.9"/>
<circle cx="322.5" cy="172" r="1.9" fill="#fff" stroke="#555" stroke-width="0.9"/>
<circle cx="342" cy="182.5" r="1.9" fill="#fff" stroke="#555" stroke-width="0.9"/>
<circle cx="189" cy="207.5" r="1.9" fill="#fff" stroke="#555" stroke-width="0.9"/>
<circle cx="115" cy="223" r="1.9" fill="#fff" stroke="#555" stroke-width="0.9"/>
<circle cx="390" cy="219.5" r="1.9" fill="#fff" stroke="#555" stroke-width="0.9"/>
<circle cx="454.5" cy="129" r="1.9" fill="#fff" stroke="#555" stroke-width="0.9"/>
<circle cx="551.75" cy="158" r="1.9" fill="#fff" stroke="#555" stroke-width="0.9"/>
<circle cx="719.5" cy="67.5" r="1.9" fill="#fff" stroke="#555" stroke-width="0.9"/>
<circle cx="766" cy="136" r="1.9" fill="#fff" stroke="#555" stroke-width="0.9"/>
<circle cx="826" cy="7" r="1.9" fill="#fff" stroke="#555" stroke-width="0.9"/>
<circle cx="982.5" cy="95.5" r="1.9" fill="#fff" stroke="#555" stroke-width="0.9"/>
<circle cx="965.5" cy="185" r="1.9" fill="#fff" stroke="#555" stroke-width="0.9"/>
<circle cx="115.75" cy="282" r="1.9" fill="#fff" stroke="#555" stroke-width="0.9"/>
<circle cx="317" cy="238" r="1.9" fill="#fff" stroke="#555" stroke-width="0.9"/>
<circle cx="388.75" cy="309" r="1.9" fill="#fff" stroke="#555" stroke-width="0.9"/>
<circle cx="266" cy="376" r="1.9" fill="#fff" stroke="#555" stroke-width="0.9"/>
<circle cx="220" cy="410" r="1.9" fill="#fff" stroke="#555" stroke-width="0.9"/>
<circle cx="113" cy="427" r="1.9" fill="#fff" stroke="#555" stroke-width="0.9"/>
<circle cx="242.5" cy="435" r="1.9" fill="#fff" stroke="#555" stroke-width="0.9"/>
<circle cx="346" cy="442.5" r="1.9" fill="#fff" stroke="#555" stroke-width="0.9"/>
<circle cx="589" cy="271.75" r="1.9" fill="#fff" stroke="#555" stroke-width="0.9"/>
<circle cx="459" cy="321.75" r="1.9" fill="#fff" stroke="#555" stroke-width="0.9"/>
<circle cx="541.5" cy="325.5" r="1.9" fill="#fff" stroke="#555" stroke-width="0.9"/>
<circle cx="736" cy="403" r="1.9" fill="#fff" stroke="#555" stroke-width="0.9"/>
<circle cx="341" cy="84.5" r="2.6" fill="#fff" stroke="#555" stroke-width="1.1"/>
<circle cx="557.5" cy="177" r="2.6" fill="#fff" stroke="#555" stroke-width="1.1"/>
<circle cx="847.5" cy="335" r="2.6" fill="#fff" stroke="#555" stroke-width="1.1"/>
<circle cx="111" cy="155" r="3.4" fill="#fff" stroke="#444" stroke-width="1"/><circle cx="111" cy="155" r="1.3" fill="#444"/>
<circle cx="860" cy="88.75" r="3.4" fill="#fff" stroke="#444" stroke-width="1"/><circle cx="860" cy="88.75" r="1.3" fill="#444"/>
<circle cx="1036.25" cy="347.5" r="3.4" fill="#fff" stroke="#444" stroke-width="1"/><circle cx="1036.25" cy="347.5" r="1.3" fill="#444"/>
<circle cx="1058.75" cy="213.75" r="3.4" fill="#fff" stroke="#444" stroke-width="1"/><circle cx="1058.75" cy="213.75" r="1.3" fill="#444"/>
<text x="225" y="47.5" font-size="10.5" font-style="normal" fill="#3c3c3c" stroke="#f6f6f0" stroke-width="2" stroke-opacity="0.75" paint-order="stroke" textLength="36" lengthAdjust="spacingAndGlyphs">Koblenz</text>
<text x="305.5" y="99.5" font-size="14" font-style="normal" fill="#333333" stroke="#f6f6f0" stroke-width="2" stroke-opacity="0.75" paint-order="stroke" textLength="72" lengthAdjust="spacingAndGlyphs">Frankfurt am</text>
<text x="328" y="114.5" font-size="14" font-style="normal" fill="#333333" stroke="#f6f6f0" stroke-width="2" stroke-opacity="0.75" paint-order="stroke" textLength="27" lengthAdjust="spacingAndGlyphs">Main</text>
<text x="162" y="138" font-size="10.5" font-style="normal" fill="#3c3c3c" stroke="#f6f6f0" stroke-width="2" stroke-opacity="0.75" paint-order="stroke" textLength="20.5" lengthAdjust="spacingAndGlyphs">Trier</text>
<text x="71" y="131" font-size="14" font-style="normal" fill="#7f6889" stroke="#f6f6f0" stroke-width="2" stroke-opacity="0.75" paint-order="stroke" textLength="73" lengthAdjust="spacingAndGlyphs">Lëtzebuerg</text>
<text x="76" y="170" font-size="14" font-style="normal" fill="#333333" stroke="#f6f6f0" stroke-width="2" stroke-opacity="0.75" paint-order="stroke" textLength="71" lengthAdjust="spacingAndGlyphs">Luxembourg</text>
<text x="24" y="82" font-size="11" font-style="italic" fill="#8d7296" stroke="#f6f6f0" stroke-width="2" stroke-opacity="0.75" paint-order="stroke" textLength="41.5" lengthAdjust="spacingAndGlyphs">Wallonie</text>
<text x="-9" y="23.5" font-size="14" font-style="normal" fill="#7f6889" stroke="#f6f6f0" stroke-width="2" stroke-opacity="0.75" paint-order="stroke" textLength="64" lengthAdjust="spacingAndGlyphs">Belgique /</text>
<text x="-34" y="39" font-size="14" font-style="normal" fill="#7f6889" stroke="#f6f6f0" stroke-width="2" stroke-opacity="0.75" paint-order="stroke" textLength="44.5" lengthAdjust="spacingAndGlyphs">België</text>
<text x="187.5" y="104" font-size="11.5" font-style="italic" fill="#8d7296" stroke="#f6f6f0" stroke-width="2" stroke-opacity="0.75" paint-order="stroke" textLength="51.5" lengthAdjust="spacingAndGlyphs">Rheinland-</text>
<text x="201" y="116" font-size="11.5" font-style="italic" fill="#8d7296" stroke="#f6f6f0" stroke-width="2" stroke-opacity="0.75" paint-order="stroke" textLength="24" lengthAdjust="spacingAndGlyphs">Pfalz</text>
<text x="165" y="191.5" font-size="11.5" font-style="italic" fill="#8d7296" stroke="#f6f6f0" stroke-width="2" stroke-opacity="0.75" paint-order="stroke" textLength="44" lengthAdjust="spacingAndGlyphs">Saarland</text>
<text x="226" y="189.5" font-size="10.5" font-style="normal" fill="#3c3c3c" stroke="#f6f6f0" stroke-width="2" stroke-opacity="0.75" paint-order="stroke" textLength="66.5" lengthAdjust="spacingAndGlyphs">Kaiserslautern</text>
<text x="297.5" y="168.5" font-size="10.5" font-style="normal" fill="#3c3c3c" stroke="#f6f6f0" stroke-width="2" stroke-opacity="0.75" paint-order="stroke" textLength="50" lengthAdjust="spacingAndGlyphs">Mannheim</text>
<text x="317" y="194" font-size="10.5" font-style="normal" fill="#3c3c3c" stroke="#f6f6f0" stroke-width="2" stroke-opacity="0.75" paint-order="stroke" textLength="52" lengthAdjust="spacingAndGlyphs">Heidelberg</text>
<text x="160" y="219.5" font-size="10.5" font-style="normal" fill="#3c3c3c" stroke="#f6f6f0" stroke-width="2" stroke-opacity="0.75" paint-order="stroke" textLength="59" lengthAdjust="spacingAndGlyphs">Saarbrücken</text>
<text x="104.5" y="234" font-size="10.5" font-style="normal" fill="#3c3c3c" stroke="#f6f6f0" stroke-width="2" stroke-opacity="0.75" paint-order="stroke" textLength="21.5" lengthAdjust="spacingAndGlyphs">Metz</text>
<text x="367.5" y="232" font-size="10.5" font-style="normal" fill="#3c3c3c" stroke="#f6f6f0" stroke-width="2" stroke-opacity="0.75" paint-order="stroke" textLength="46.5" lengthAdjust="spacingAndGlyphs">Heilbronn</text>
<text x="360" y="28.5" font-size="11.5" font-style="italic" fill="#8d7296" stroke="#f6f6f0" stroke-width="2" stroke-opacity="0.75" paint-order="stroke" textLength="35" lengthAdjust="spacingAndGlyphs">Hessen</text>
<text x="432" y="140" font-size="10.5" font-style="normal" fill="#3c3c3c" stroke="#f6f6f0" stroke-width="2" stroke-opacity="0.75" paint-order="stroke" textLength="45.5" lengthAdjust="spacingAndGlyphs">Würzburg</text>
<text x="531" y="152.5" font-size="10.5" font-style="normal" fill="#3c3c3c" stroke="#f6f6f0" stroke-width="2" stroke-opacity="0.75" paint-order="stroke" textLength="41.5" lengthAdjust="spacingAndGlyphs">Erlangen</text>
<text x="531" y="189.5" font-size="14" font-style="normal" fill="#333333" stroke="#f6f6f0" stroke-width="2" stroke-opacity="0.75" paint-order="stroke" textLength="54" lengthAdjust="spacingAndGlyphs">Nürnberg</text>
<text x="703" y="79.5" font-size="10.5" font-style="normal" fill="#3c3c3c" stroke="#f6f6f0" stroke-width="2" stroke-opacity="0.75" paint-order="stroke" textLength="34" lengthAdjust="spacingAndGlyphs">Karlovy</text>
<text x="710" y="91" font-size="10.5" font-style="normal" fill="#3c3c3c" stroke="#f6f6f0" stroke-width="2" stroke-opacity="0.75" paint-order="stroke" textLength="20.5" lengthAdjust="spacingAndGlyphs">Vary</text>
<text x="753" y="146" font-size="10.5" font-style="normal" fill="#3c3c3c" stroke="#f6f6f0" stroke-width="2" stroke-opacity="0.75" paint-order="stroke" textLength="25" lengthAdjust="spacingAndGlyphs">Plzeň</text>
<text x="809" y="3" font-size="10.5" font-style="normal" fill="#3c3c3c" stroke="#f6f6f0" stroke-width="2" stroke-opacity="0.75" paint-order="stroke" textLength="32" lengthAdjust="spacingAndGlyphs">Leipzig</text>
<text x="769" y="38" font-size="11.5" font-style="italic" fill="#8d7296" stroke="#f6f6f0" stroke-width="2" stroke-opacity="0.75" paint-order="stroke" textLength="64" lengthAdjust="spacingAndGlyphs">Severozápad</text>
<text x="792.5" y="198" font-size="11.5" font-style="italic" fill="#8d7296" stroke="#f6f6f0" stroke-width="2" stroke-opacity="0.75" paint-order="stroke" textLength="35" lengthAdjust="spacingAndGlyphs">Jihozáp</text>
<text x="829" y="192" font-size="11.5" font-style="italic" fill="#6e7a7c" stroke="#f6f6f0" stroke-width="2" stroke-opacity="0.75" paint-order="stroke" textLength="13.5" lengthAdjust="spacingAndGlyphs">ten</text>
<text x="829" y="204" font-size="11.5" font-style="italic" fill="#6e7a7c" stroke="#f6f6f0" stroke-width="2" stroke-opacity="0.75" paint-order="stroke" textLength="13" lengthAdjust="spacingAndGlyphs">ad</text>
<text x="847.5" y="65.5" font-size="14" font-style="normal" fill="#333333" stroke="#f6f6f0" stroke-width="2" stroke-opacity="0.75" paint-order="stroke" textLength="26.5" lengthAdjust="spacingAndGlyphs">Prag</text>
<text x="844.5" y="82.5" font-size="14" font-style="normal" fill="#333333" stroke="#f6f6f0" stroke-width="2" stroke-opacity="0.75" paint-order="stroke" textLength="31.5" lengthAdjust="spacingAndGlyphs">Praha</text>
<text x="962.5" y="56" font-size="11.5" font-style="italic" fill="#6e7a7c" stroke="#f6f6f0" stroke-width="2" stroke-opacity="0.75" paint-order="stroke" textLength="51.5" lengthAdjust="spacingAndGlyphs">Nordosten</text>
<text x="955" y="68" font-size="11.5" font-style="italic" fill="#6e7a7c" stroke="#f6f6f0" stroke-width="2" stroke-opacity="0.75" paint-order="stroke" textLength="66" lengthAdjust="spacingAndGlyphs">Severovýchod</text>
<text x="987.5" y="94" font-size="10.5" font-style="normal" fill="#3c3c3c" stroke="#f6f6f0" stroke-width="2" stroke-opacity="0.75" paint-order="stroke" textLength="46.5" lengthAdjust="spacingAndGlyphs">Pardubice</text>
<text x="987.5" y="105" font-size="10.5" font-style="normal" fill="#3c3c3c" stroke="#f6f6f0" stroke-width="2" stroke-opacity="0.75" paint-order="stroke" textLength="43.5" lengthAdjust="spacingAndGlyphs">Pardubitz</text>
<text x="925" y="125" font-size="15" font-style="normal" fill="#5d6b6b" stroke="#f6f6f0" stroke-width="2" stroke-opacity="0.75" paint-order="stroke" textLength="71" lengthAdjust="spacingAndGlyphs">Tschechien</text>
<text x="941" y="141" font-size="15" font-style="normal" fill="#5d6b6b" stroke="#f6f6f0" stroke-width="2" stroke-opacity="0.75" paint-order="stroke" textLength="39" lengthAdjust="spacingAndGlyphs">Česko</text>
<text x="951" y="197" font-size="10.5" font-style="normal" fill="#3c3c3c" stroke="#f6f6f0" stroke-width="2" stroke-opacity="0.75" paint-order="stroke" textLength="30" lengthAdjust="spacingAndGlyphs">Jihlava</text>
<text x="954" y="208" font-size="10.5" font-style="normal" fill="#3c3c3c" stroke="#f6f6f0" stroke-width="2" stroke-opacity="0.75" paint-order="stroke" textLength="23.5" lengthAdjust="spacingAndGlyphs">Iglau</text>
<text x="992.5" y="204" font-size="11.5" font-style="italic" fill="#6e7a7c" stroke="#f6f6f0" stroke-width="2" stroke-opacity="0.75" paint-order="stroke" textLength="45" lengthAdjust="spacingAndGlyphs">Südosten</text>
<text x="989" y="215.5" font-size="11.5" font-style="italic" fill="#6e7a7c" stroke="#f6f6f0" stroke-width="2" stroke-opacity="0.75" paint-order="stroke" textLength="52" lengthAdjust="spacingAndGlyphs">Jihovýchod</text>
<text x="1064" y="211" font-size="14" font-style="normal" fill="#333333" stroke="#f6f6f0" stroke-width="2" stroke-opacity="0.75" paint-order="stroke" textLength="26" lengthAdjust="spacingAndGlyphs">Brno</text>
<text x="1064" y="226" font-size="14" font-style="normal" fill="#333333" stroke="#f6f6f0" stroke-width="2" stroke-opacity="0.75" paint-order="stroke" textLength="40" lengthAdjust="spacingAndGlyphs">Brünn</text>
<text x="57.5" y="270" font-size="11.5" font-style="italic" fill="#8d7296" stroke="#f6f6f0" stroke-width="2" stroke-opacity="0.75" paint-order="stroke" textLength="46.5" lengthAdjust="spacingAndGlyphs">Grand Est</text>
<text x="102" y="293" font-size="10.5" font-style="normal" fill="#3c3c3c" stroke="#f6f6f0" stroke-width="2" stroke-opacity="0.75" paint-order="stroke" textLength="28.5" lengthAdjust="spacingAndGlyphs">Nancy</text>
<text x="226.75" y="291.5" font-size="14.5" font-style="normal" fill="#333333" stroke="#f6f6f0" stroke-width="2" stroke-opacity="0.75" paint-order="stroke" textLength="61.25" lengthAdjust="spacingAndGlyphs">Strasbourg</text>
<text x="294.5" y="250.5" font-size="10.5" font-style="normal" fill="#3c3c3c" stroke="#f6f6f0" stroke-width="2" stroke-opacity="0.75" paint-order="stroke" textLength="44.25" lengthAdjust="spacingAndGlyphs">Karlsruhe</text>
<text x="328.6" y="282" font-size="11.5" font-style="italic" fill="#6e7a7c" stroke="#f6f6f0" stroke-width="2" stroke-opacity="0.75" paint-order="stroke" textLength="99.4" lengthAdjust="spacingAndGlyphs">Baden-Württemberg</text>
<text x="328.6" y="294" font-size="11.5" font-style="italic" fill="#6e7a7c" stroke="#f6f6f0" stroke-width="2" stroke-opacity="0.75" paint-order="stroke" textLength="99.4" lengthAdjust="spacingAndGlyphs">Baden-Württemberg</text>
<text x="365" y="320.5" font-size="10.5" font-style="normal" fill="#3c3c3c" stroke="#f6f6f0" stroke-width="2" stroke-opacity="0.75" paint-order="stroke" textLength="49.5" lengthAdjust="spacingAndGlyphs">Reutlingen</text>
<text x="247.5" y="387" font-size="10.5" font-style="normal" fill="#3c3c3c" stroke="#f6f6f0" stroke-width="2" stroke-opacity="0.75" paint-order="stroke" textLength="38.5" lengthAdjust="spacingAndGlyphs">Freiburg</text>
<text x="238.75" y="399" font-size="10.5" font-style="normal" fill="#3c3c3c" stroke="#f6f6f0" stroke-width="2" stroke-opacity="0.75" paint-order="stroke" textLength="55.75" lengthAdjust="spacingAndGlyphs">im Breisgau</text>
<text x="170.5" y="414.5" font-size="10.5" font-style="normal" fill="#3c3c3c" stroke="#f6f6f0" stroke-width="2" stroke-opacity="0.75" paint-order="stroke" textLength="45.5" lengthAdjust="spacingAndGlyphs">Mulhouse</text>
<text x="98" y="424.5" font-size="10.5" font-style="normal" fill="#3c3c3c" stroke="#f6f6f0" stroke-width="2" stroke-opacity="0.75" paint-order="stroke" textLength="30.75" lengthAdjust="spacingAndGlyphs">Vesoul</text>
<text x="230.5" y="433" font-size="10.5" font-style="normal" fill="#3c3c3c" stroke="#f6f6f0" stroke-width="2" stroke-opacity="0.75" paint-order="stroke" textLength="25" lengthAdjust="spacingAndGlyphs">Basel</text>
<text x="320.5" y="440.5" font-size="10.5" font-style="normal" fill="#3c3c3c" stroke="#f6f6f0" stroke-width="2" stroke-opacity="0.75" paint-order="stroke" textLength="50.5" lengthAdjust="spacingAndGlyphs">Winterthur</text>
<text x="621" y="250.5" font-size="11.5" font-style="italic" fill="#8d7296" stroke="#f6f6f0" stroke-width="2" stroke-opacity="0.75" paint-order="stroke" textLength="34" lengthAdjust="spacingAndGlyphs">Bayern</text>
<text x="565.75" y="285" font-size="10.5" font-style="normal" fill="#3c3c3c" stroke="#f6f6f0" stroke-width="2" stroke-opacity="0.75" paint-order="stroke" textLength="46.75" lengthAdjust="spacingAndGlyphs">Ingolstadt</text>
<text x="450.75" y="318.75" font-size="10.5" font-style="normal" fill="#3c3c3c" stroke="#f6f6f0" stroke-width="2" stroke-opacity="0.75" paint-order="stroke" textLength="18.75" lengthAdjust="spacingAndGlyphs">Ulm</text>
<text x="519.5" y="336.5" font-size="10.5" font-style="normal" fill="#3c3c3c" stroke="#f6f6f0" stroke-width="2" stroke-opacity="0.75" paint-order="stroke" textLength="44.5" lengthAdjust="spacingAndGlyphs">Augsburg</text>
<text x="577.5" y="372.5" font-size="14" font-style="normal" fill="#333333" stroke="#f6f6f0" stroke-width="2" stroke-opacity="0.75" paint-order="stroke" textLength="54.5" lengthAdjust="spacingAndGlyphs">München</text>
<text x="715.5" y="398.5" font-size="10.5" font-style="normal" fill="#3c3c3c" stroke="#f6f6f0" stroke-width="2" stroke-opacity="0.75" paint-order="stroke" textLength="40.25" lengthAdjust="spacingAndGlyphs">Salzburg</text>
<text x="752" y="365" font-size="11.5" font-style="italic" fill="#8d7296" stroke="#f6f6f0" stroke-width="2" stroke-opacity="0.75" paint-order="stroke" textLength="71" lengthAdjust="spacingAndGlyphs">Oberösterreich</text>
<text x="737.5" y="449" font-size="11.5" font-style="italic" fill="#8d7296" stroke="#f6f6f0" stroke-width="2" stroke-opacity="0.75" paint-order="stroke" textLength="40" lengthAdjust="spacingAndGlyphs">Salzburg</text>
<text x="837.5" y="348.75" font-size="14" font-style="normal" fill="#333333" stroke="#f6f6f0" stroke-width="2" stroke-opacity="0.75" paint-order="stroke" textLength="21.25" lengthAdjust="spacingAndGlyphs">Linz</text>
<text x="1022.5" y="342.5" font-size="14" font-style="normal" fill="#333333" stroke="#f6f6f0" stroke-width="2" stroke-opacity="0.75" paint-order="stroke" textLength="27.5" lengthAdjust="spacingAndGlyphs">Wien</text>
<text x="925" y="351" font-size="11.5" font-style="italic" fill="#8d7296" stroke="#f6f6f0" stroke-width="2" stroke-opacity="0.75" paint-order="stroke" textLength="78.75" lengthAdjust="spacingAndGlyphs">Niederösterreich</text>
<text x="857" y="425" font-size="17" font-style="normal" fill="#7f6889" stroke="#f6f6f0" stroke-width="2" stroke-opacity="0.75" paint-order="stroke" textLength="67" lengthAdjust="spacingAndGlyphs">Österreich</text>
<text x="1076" y="371" font-size="14" font-style="normal" fill="#333333" stroke="#f6f6f0" stroke-width="2" stroke-opacity="0.75" paint-order="stroke" textLength="64" lengthAdjust="spacingAndGlyphs">Bratislava</text>
</svg>
 <div class="clu"><span>17</span></div>
 <svg style="position:absolute;left:547px;top:407px" width="26" height="38" viewBox="0 0 26 38"><path d="M13,1 C19.6,1 25,6.2 25,12.8 C25,19 19,26 13,36.5 C7,26 1,19 1,12.8 C1,6.2 6.4,1 13,1 Z" fill="#ff8200"/><circle cx="13" cy="12.5" r="6" fill="#fff"/></svg>
 <div class="zoom"><div style="top:0;border-bottom:1px solid #ccc;height:30px"></div><div style="top:30px"></div></div>
 <svg style="position:absolute;left:0;top:0" width="60" height="80"><path d="M21.1,29.5 H33.7 M27.4,23.2 V35.8 M21.1,59 H33.7" stroke="#000" stroke-width="2.5"/></svg>
 <div class="attr"><a>Leaflet</a> | © <a>OpenStreetMap</a> contributors</div>
</div>

<div class="tbl">
 <div class="cell h" style="left:10px;top:14px">Titel</div><div class="cell h" style="left:551px;top:14px">Bereich</div><div class="cell h" style="left:821px;top:14px">Standort</div>
 <div class="ln" style="top:47px"></div>
 <div class="ln" style="top:89px"></div>
 <div class="ln" style="top:131px"></div>
 <div class="ln" style="top:172px"></div>
 <div class="ln" style="top:214px"></div>
 <div class="cell o" style="left:10px;top:58px">Facharzt für Radiologie (m/w/d)</div><div class="cell n" style="left:551px;top:58px">Arzt</div><div class="cell n" style="left:821px;top:58px">München</div>
 <div class="cell o" style="left:10px;top:100px">Facharzt für Radiologie (m/w/d)</div><div class="cell n" style="left:551px;top:100px">Arzt</div><div class="cell n" style="left:821px;top:100px">Rosenheim</div>
 <div class="cell o" style="left:10px;top:141px">Facharzt für Radiologie - Schwerpunkt Mammographie (m/w/d)</div><div class="cell n" style="left:551px;top:141px">Arzt</div><div class="cell n" style="left:821px;top:141px">München</div>
 <div class="cell o" style="left:10px;top:183px">Facharzt für Strahlentherapie (m/w/d)</div><div class="cell n" style="left:551px;top:183px">Arzt</div><div class="cell n" style="left:821px;top:183px">München</div>
 <div class="cell o" style="left:10px;top:225px">Medizinische Fachangestellte Anmeldung / Abrechnung in der</div><div class="cell n" style="left:551px;top:225px">Anmeldung</div><div class="cell n" style="left:821px;top:225px">München</div>
 <div class="cell o" style="left:10px;top:245px">Strahlentherapie (m/w/d)</div>
</div>
</body></html>
